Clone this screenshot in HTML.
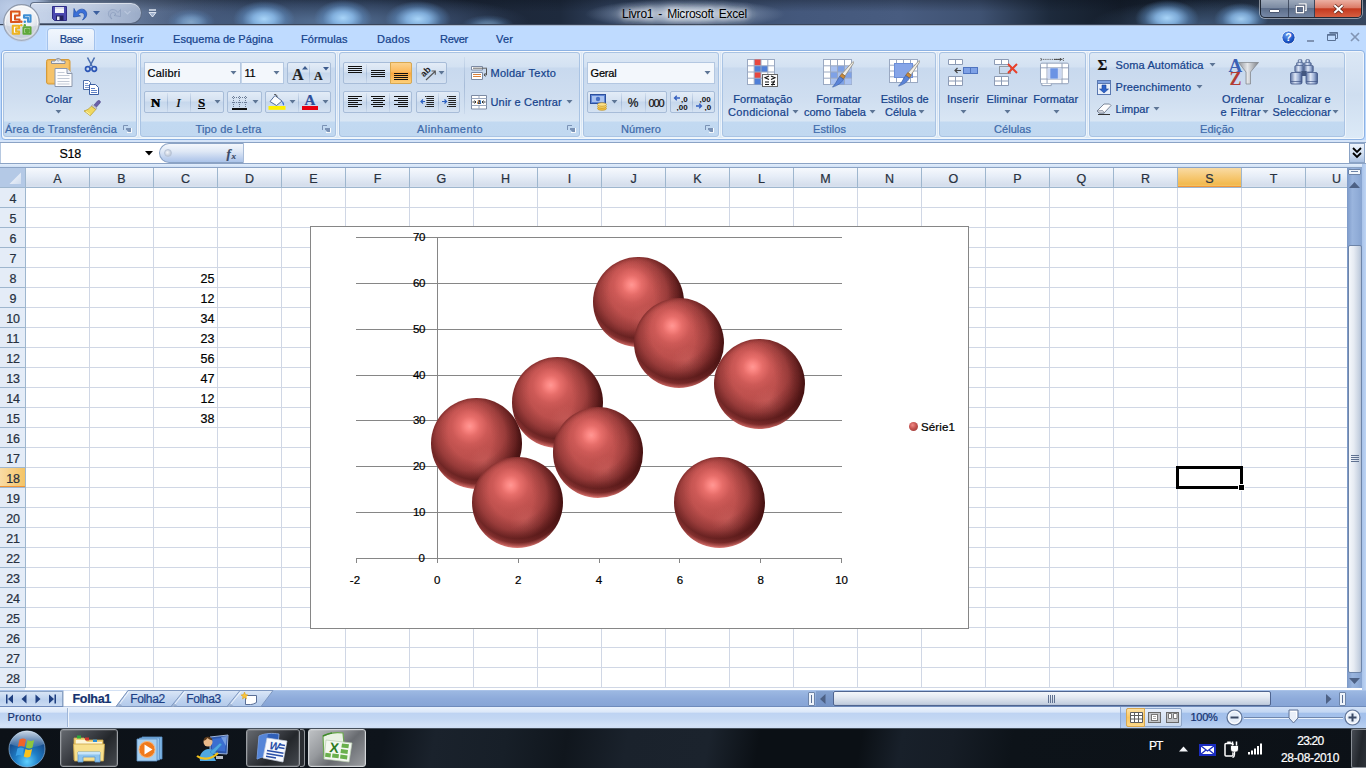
<!DOCTYPE html>
<html lang="pt"><head><meta charset="utf-8"><title>Livro1 - Microsoft Excel</title>
<style>
html,body{margin:0;padding:0}
body{width:1366px;height:768px;overflow:hidden;position:relative;background:#fff;font-family:"Liberation Sans",sans-serif;font-size:11px;color:#15428b}
div,span,svg{position:absolute;box-sizing:border-box}
.t{white-space:nowrap;display:block;-webkit-text-stroke:.22px}
/* title bar */
#title{left:0;top:0;width:1366px;height:26px;background:#1a2536;overflow:hidden}
#tabrow{left:0;top:26px;width:1366px;height:24px;background:#bfdbff}
#ribbon{left:0;top:50px;width:1366px;height:92px;background:#bfdbff}
.grp{top:2px;height:85px;border:1px solid #a9c3e3;border-radius:3px;background:linear-gradient(#dde8f5 0,#d3e1f2 14px,#c8d9ee 15px,#cfdef0 45px,#d9e6f4 68px,#c2d9f1 69px,#c1d8f0 84px);box-shadow:0 0 0 1px rgba(255,255,255,.55)}
.btn{border:1px solid #a7bcd8;border-radius:2px;background:linear-gradient(#e3ecf7 0,#d4e1f1 45%,#c6d7ec 50%,#d5e2f2 100%)}
.combo{border:1px solid #b3c7e1;background:#f3f7fc}
.arr{width:0;height:0;border-left:3px solid transparent;border-right:3px solid transparent;border-top:3px solid #5d7595}
.dl{width:8px;height:8px}
</style></head><body>
<div id="title" style="background:radial-gradient(ellipse 100px 15px at 685px 14px, rgba(222,230,241,.9), rgba(185,199,218,.7) 45%, rgba(140,158,186,.35) 75%, rgba(120,140,170,0) 100%),radial-gradient(ellipse 42px 30px at 12px 8px, rgba(190,206,232,1), rgba(175,194,224,.9) 60%, rgba(120,140,170,0) 100%),radial-gradient(ellipse 31px 18px at 264px 19px, rgba(168,212,248,1.0) 0, rgba(140,190,238,0.85) 35%, rgba(100,150,205,0.40) 70%, rgba(70,105,150,0) 100%),radial-gradient(ellipse 29px 18px at 343px 18px, rgba(168,212,248,1.0) 0, rgba(140,190,238,0.85) 35%, rgba(100,150,205,0.40) 70%, rgba(70,105,150,0) 100%),radial-gradient(ellipse 33px 18px at 418px 19px, rgba(168,212,248,1.0) 0, rgba(140,190,238,0.85) 35%, rgba(100,150,205,0.40) 70%, rgba(70,105,150,0) 100%),radial-gradient(ellipse 24px 13px at 191px 22px, rgba(168,212,248,0.6) 0, rgba(140,190,238,0.51) 35%, rgba(100,150,205,0.24) 70%, rgba(70,105,150,0) 100%),radial-gradient(ellipse 26px 10px at 488px 25px, rgba(168,212,248,0.5) 0, rgba(140,190,238,0.42) 35%, rgba(100,150,205,0.20) 70%, rgba(70,105,150,0) 100%),radial-gradient(ellipse 32px 18px at 1167px 18px, rgba(168,212,248,1.0) 0, rgba(140,190,238,0.85) 35%, rgba(100,150,205,0.40) 70%, rgba(70,105,150,0) 100%),radial-gradient(ellipse 27px 16px at 1241px 19px, rgba(168,212,248,0.95) 0, rgba(140,190,238,0.81) 35%, rgba(100,150,205,0.38) 70%, rgba(70,105,150,0) 100%),radial-gradient(ellipse 200px 30px at 330px 22px, rgba(95,125,165,.85), rgba(75,100,140,.5) 60%, rgba(50,70,100,0) 100%),radial-gradient(ellipse 110px 24px at 1200px 24px, rgba(80,110,150,.6), rgba(50,70,100,0) 100%),linear-gradient(rgba(10,16,26,.35) 0,rgba(10,16,26,0) 45%),linear-gradient(90deg,#8a9fc0 0,#8196b8 60px,#667a9b 130px,#4a5c7a 190px,#2c3a51 250px,#1f2b3d 310px,#1b2536 440px,#1e2a3d 560px,#31425e 610px,#3d506e 700px,#44587c 800px,#485c80 900px,#3f5272 980px,#1d2a3c 1050px,#141d2a 1120px,#1d2a3c 1200px,#2c3b52 1280px,#35465f 1366px)"></div>
<div style="left:0;top:24px;width:1366px;height:1px;background:#39455a"></div>
<div style="left:0;top:25px;width:1366px;height:1px;background:#a9bad2"></div>
<span class="t" style="left:622.0px;top:5.5px;font-size:12px;line-height:16px;color:#000;letter-spacing:-0.24px;word-spacing:2px;-webkit-text-stroke:0;text-shadow:0 0 5px rgba(255,255,255,.95),0 0 9px rgba(255,255,255,.8),0 0 14px rgba(255,255,255,.6);">Livro1 - Microsoft Excel</span>
<div id="tabrow"></div>
<div style="left:30px;top:2px;width:112px;height:22px;border:1px solid rgba(70,85,110,.8);border-radius:4px 11px 11px 0;background:linear-gradient(rgba(255,255,255,.18),rgba(255,255,255,0) 50%),linear-gradient(90deg,rgba(200,213,234,.95) 0,rgba(190,204,228,.92) 50%,rgba(165,181,208,.85) 100%);box-shadow:inset 0 1px 0 rgba(255,255,255,.5)"></div>
<svg style="left:52px;top:6px" width="15" height="15" viewBox="0 0 15 15"><path d="M0.500 0.500h14v14h-12l-2-2z" fill="#4a48b0" stroke="#2f2d86"/><rect x="3" y="1" width="9" height="6" fill="#f2f4fa"/><rect x="4" y="9.500" width="7.500" height="5" fill="#23225e"/><rect x="5" y="10.500" width="2.500" height="3.500" fill="#e8eaf4"/><path d="M3 1h9v2H3z" fill="#c9cde4" opacity=".6"/></svg>
<svg style="left:73px;top:6px" width="16" height="15" viewBox="0 0 16 15"><path d="M3 6.500c3-4 8-4.500 10-1 1.800 3.200 0 7-3.500 8.500 2-2.500 2.500-5 1-6.500-1.500-1.500-4-1-5.500 1l2.500 1.500L0.500 11 1 2.500z" fill="#3a6fd8" stroke="#2450a8" stroke-width=".7"/></svg>
<svg style="left:93px;top:11px" width="7" height="4"><path d="M0 0h7L3.500 4z" fill="#3c5f9e"/></svg>
<svg style="left:106px;top:7px" width="15" height="13" viewBox="0 0 15 13"><path d="M12 5.500c-2.500-3.500-7-4-9-1-1.500 2.800 0 6 3 7.500-1.800-2.200-2-4.300-.8-5.700 1.300-1.300 3.500-.9 4.800.9L8 8.500l6.500 1V2.500z" fill="#a9b8d2" stroke="#8497b8" stroke-width=".6"/></svg>
<svg style="left:124px;top:11px" width="7" height="4"><path d="M0.500 0l3 3 3-3" fill="none" stroke="#b9c6dc" stroke-width="1.200"/></svg>
<svg style="left:148px;top:9px" width="9" height="9" viewBox="0 0 9 9"><path d="M1 1h7" stroke="#e6ecf6" stroke-width="1.400"/><path d="M1 3.500h7L4.500 8z" fill="#9fb0cc" stroke="#e6ecf6" stroke-width=".9"/></svg>
<svg style="left:2px;top:3px" width="40" height="40" viewBox="0 0 40 40"><defs>
<radialGradient id="ob" cx=".5" cy=".3" r=".8"><stop offset="0" stop-color="#ffffff"/><stop offset=".45" stop-color="#eceff4"/><stop offset=".75" stop-color="#cfd5df"/><stop offset="1" stop-color="#f3f5f9"/></radialGradient></defs>
<circle cx="19.500" cy="19.500" r="17.800" fill="url(#ob)" stroke="#8e99ab" stroke-width="1.200"/>
<circle cx="19.500" cy="19.500" r="16.300" fill="none" stroke="#fff" stroke-width="1" opacity=".8"/>
<path d="M2.500 22a17 17 0 0 0 34 0c-9 3-24 3-34 0z" fill="#bfc6d2" opacity=".45"/>
<g fill="none" stroke-width="2.100" stroke-linejoin="round">
<path d="M9 8.500h8.500v4h-4.500v4h4.500v2.500H9z" stroke="#d9541e" fill="#fff"/><path d="M10.200 9.700h6.100" stroke="#f39a4d" stroke-width="1"/>
<path d="M22 12.200h6.500v6.500h-2.500v-4h-4z" stroke="#3f8fd4" fill="#fff"/>
<path d="M10.800 22.800h6.300v2.500h-3v3.200h3v2.300h-6.300z" stroke="#eeb422" fill="#fff"/>
<path d="M21.500 24.300h7v6.500h-7zM24 26.500h2.300v2.200H24z" stroke="#5fa83a" fill="#fff"/></g>
<circle cx="19.300" cy="18.800" r="1.300" fill="#d9541e"/><circle cx="22.800" cy="18.800" r="1.300" fill="#3f8fd4"/><circle cx="19.300" cy="22.300" r="1.200" fill="#eeb422"/><circle cx="22.800" cy="22.300" r="1.200" fill="#5fa83a"/>
</svg>
<div style="left:1260px;top:-1px;width:102px;height:19px;border:1px solid rgba(20,28,40,.9);border-radius:0 0 5px 5px;box-shadow:0 0 0 1px rgba(255,255,255,.45);background:linear-gradient(rgba(200,212,230,.75) 0,rgba(160,176,200,.7) 45%,rgba(110,128,158,.75) 50%,rgba(140,158,188,.75) 100%)"></div>
<div style="left:1315px;top:0;width:46px;height:17px;border-radius:0 0 4px 0;background:linear-gradient(#ecb0a2 0,#dc7c68 45%,#c4391e 52%,#d65f42 100%)"></div>
<div style="left:1288px;top:0;width:1px;height:17px;background:rgba(40,50,70,.7)"></div><div style="left:1314px;top:0;width:1px;height:17px;background:rgba(40,50,70,.8)"></div>
<div style="left:1269px;top:9px;width:11px;height:4px;background:#fff;border:1px solid #4b5872;border-radius:1px"></div>
<svg style="left:1295px;top:3px" width="12" height="11" viewBox="0 0 14 13"><path d="M4 1h9v8h-3" fill="none" stroke="#4b5872" stroke-width="3.200"/><path d="M4 1h9v8h-3" fill="none" stroke="#fff" stroke-width="1.600"/><rect x="1.500" y="4" width="8.500" height="7.500" fill="none" stroke="#4b5872" stroke-width="3.200"/><rect x="1.500" y="4" width="8.500" height="7.500" fill="none" stroke="#fff" stroke-width="1.600"/></svg>
<svg style="left:1332px;top:4px" width="13" height="10" viewBox="0 0 15 12"><path d="M2.500 1.500l10 9M12.500 1.500l-10 9" stroke="#5a2418" stroke-width="4.200"/><path d="M2.500 1.500l10 9M12.500 1.500l-10 9" stroke="#fff" stroke-width="2.400"/></svg>
<div style="left:47px;top:28px;width:48px;height:23px;border:1px solid #a3c2ec;border-bottom:none;border-radius:4px 4px 0 0;background:linear-gradient(#f1f6fd,#e6effb 60%,#dde9f8);box-shadow:0 0 2px rgba(255,255,255,.8)"></div>
<span class="t" style="left:59.7px;top:32.0px;font-size:11px;line-height:14px;color:#15428b;letter-spacing:-0.54px;">Base</span>
<span class="t" style="left:111.0px;top:32.0px;font-size:11px;line-height:14px;color:#15428b;letter-spacing:0.35px;">Inserir</span>
<span class="t" style="left:173.0px;top:32.0px;font-size:11px;line-height:14px;color:#15428b;letter-spacing:0.05px;">Esquema de Página</span>
<span class="t" style="left:301.0px;top:32.0px;font-size:11px;line-height:14px;color:#15428b;letter-spacing:0.08px;">Fórmulas</span>
<span class="t" style="left:377.0px;top:32.0px;font-size:11px;line-height:14px;color:#15428b;letter-spacing:0.24px;">Dados</span>
<span class="t" style="left:440.0px;top:32.0px;font-size:11px;line-height:14px;color:#15428b;letter-spacing:-0.27px;">Rever</span>
<span class="t" style="left:496.0px;top:32.0px;font-size:11px;line-height:14px;color:#15428b;letter-spacing:0.16px;">Ver</span>
<svg style="left:1281px;top:30px" width="15" height="15" viewBox="0 0 15 15"><defs><radialGradient id="hg" cx=".4" cy=".3" r=".8"><stop offset="0" stop-color="#6fa0ee"/><stop offset=".6" stop-color="#1f57c8"/><stop offset="1" stop-color="#0c3a9a"/></radialGradient></defs><circle cx="7.5" cy="7.5" r="6.6" fill="url(#hg)" stroke="#e8f0fb" stroke-width="1"/><text x="7.5" y="11.3" font-family="Liberation Sans,sans-serif" font-size="10.5" font-weight="bold" fill="#fff" text-anchor="middle">?</text></svg>
<div style="left:1307px;top:40px;width:7px;height:2px;background:#7f93b3"></div>
<svg style="left:1327px;top:32px" width="11" height="9" viewBox="0 0 11 9"><path d="M2.5 0.5h8v6h-2M0.5 2.5h8v6h-8z" fill="none" stroke="#5a7194"/><path d="M2.5 1h8M0.5 3h8" stroke="#5a7194" stroke-width="1.6"/></svg>
<svg style="left:1350px;top:32px" width="10" height="10" viewBox="0 0 10 10"><path d="M1 1l8 8M9 1l-8 8" stroke="#8295b4" stroke-width="1.700"/></svg>
<div id="ribbon">
<div style="left:1px;top:0;width:1364px;height:90px;border:1px solid #8db2e3;border-radius:4px;background:linear-gradient(#dbe7f5,#cfdef0 50%,#dceaf7);box-shadow:inset 0 0 0 1px rgba(255,255,255,.6)"></div>
<div class="grp" style="left:3px;width:134px"></div><span class="t" style="left:5.0px;top:72.0px;font-size:11px;line-height:14px;color:#3e6aaa;letter-spacing:0.18px;">Área de Transferência</span><svg style="left:123px;top:75px" width="9" height="9" viewBox="0 0 9 9"><path d="M0.5 5V0.5H5" fill="none" stroke="#7a92b5" stroke-width="1"/><path d="M3 3h5v5h-1.5L3 4.5z" fill="#7a92b5"/><path d="M4 7.5h4.5v-4.5" fill="none" stroke="#fff" stroke-width="1" opacity=".9"/></svg>
<div class="grp" style="left:140px;width:196px"></div><span class="t" style="left:195.5px;top:72.0px;font-size:11px;line-height:14px;color:#3e6aaa;letter-spacing:0.12px;">Tipo de Letra</span><svg style="left:322px;top:75px" width="9" height="9" viewBox="0 0 9 9"><path d="M0.5 5V0.5H5" fill="none" stroke="#7a92b5" stroke-width="1"/><path d="M3 3h5v5h-1.5L3 4.5z" fill="#7a92b5"/><path d="M4 7.5h4.5v-4.5" fill="none" stroke="#fff" stroke-width="1" opacity=".9"/></svg>
<div class="grp" style="left:339px;width:241px"></div><span class="t" style="left:417.0px;top:72.0px;font-size:11px;line-height:14px;color:#3e6aaa;letter-spacing:0.44px;">Alinhamento</span><svg style="left:567px;top:75px" width="9" height="9" viewBox="0 0 9 9"><path d="M0.5 5V0.5H5" fill="none" stroke="#7a92b5" stroke-width="1"/><path d="M3 3h5v5h-1.5L3 4.5z" fill="#7a92b5"/><path d="M4 7.5h4.5v-4.5" fill="none" stroke="#fff" stroke-width="1" opacity=".9"/></svg>
<div class="grp" style="left:583px;width:136px"></div><span class="t" style="left:621.0px;top:72.0px;font-size:11px;line-height:14px;color:#3e6aaa;letter-spacing:0.15px;">Número</span><svg style="left:705px;top:75px" width="9" height="9" viewBox="0 0 9 9"><path d="M0.5 5V0.5H5" fill="none" stroke="#7a92b5" stroke-width="1"/><path d="M3 3h5v5h-1.5L3 4.5z" fill="#7a92b5"/><path d="M4 7.5h4.5v-4.5" fill="none" stroke="#fff" stroke-width="1" opacity=".9"/></svg>
<div class="grp" style="left:722px;width:214px"></div><span class="t" style="left:813.0px;top:72.0px;font-size:11px;line-height:14px;color:#3e6aaa;letter-spacing:0.09px;">Estilos</span>
<div class="grp" style="left:939px;width:147px"></div><span class="t" style="left:994.0px;top:72.0px;font-size:11px;line-height:14px;color:#3e6aaa;letter-spacing:0.05px;">Células</span>
<div class="grp" style="left:1089px;width:256px"></div><span class="t" style="left:1200.0px;top:72.0px;font-size:11px;line-height:14px;color:#3e6aaa;letter-spacing:0.06px;">Edição</span>
<svg style="left:45px;top:6px" width="29" height="33" viewBox="0 0 29 33">
<rect x="1.500" y="3.500" width="23.500" height="24.500" rx="2" fill="#f2b956" stroke="#d39a3c"/>
<rect x="3" y="5" width="20.500" height="21.500" rx="1" fill="#f7c772" opacity=".75"/>
<path d="M6.500 7.500V5H10a3.300 3.300 0 0 1 6.400 0H20v2.500z" fill="#eceef2" stroke="#7f8796" stroke-width=".9"/><circle cx="13.200" cy="4" r="1.100" fill="#fff" stroke="#7f8796" stroke-width=".6"/>
<path d="M10 12.500h12l5 5v13h-17z" fill="#fdfdfe" stroke="#8c98ad"/>
<path d="M22 12.500v5h5" fill="#e4e9f2" stroke="#8c98ad"/>
<path d="M12.500 16.500h7M12.500 19.500h12M12.500 22.500h12M12.500 25.500h12M12.500 28h12" stroke="#c3cad6" stroke-width="1"/></svg>
<span class="t" style="left:45.6px;top:42.0px;font-size:11px;line-height:14px;color:#15428b;letter-spacing:0.04px;">Colar</span>
<svg style="left:55px;top:60px" width="7" height="4" viewBox="0 0 7 4"><path d="M0.5 0h6L3.5 3.5z" fill="#5d7595"/></svg>
<svg style="left:84px;top:7px" width="14" height="16" viewBox="0 0 14 16">
<path d="M3.5 0.5L8 9M10.5 0.5L6 9" stroke="#4b6fb0" stroke-width="1.6" fill="none"/>
<circle cx="3.8" cy="12" r="2.3" fill="none" stroke="#2b55b5" stroke-width="1.7"/><circle cx="10.2" cy="12" r="2.3" fill="none" stroke="#2b55b5" stroke-width="1.7"/></svg>
<svg style="left:83px;top:30px" width="16" height="15" viewBox="0 0 16 15">
<path d="M0.5 0.5h5l2 2v7h-7z" fill="#fff" stroke="#4a6ca8"/><path d="M2 3.5h3M2 5.5h4M2 7.5h4" stroke="#7f9bd0"/>
<path d="M6.5 4.5h6l3 3v7h-9z" fill="#fff" stroke="#3b5fa3"/><path d="M8 8.5h4M8 10.5h6M8 12.5h6" stroke="#5f82c6"/></svg>
<svg style="left:83px;top:50px" width="18" height="17" viewBox="0 0 18 17">
<path d="M11 5l3.5-4a1.6 1.6 0 0 1 2.5 2l-3.5 4z" fill="#6a5fa8" stroke="#4c4488" stroke-width=".6"/>
<path d="M9.5 4.5l4.5 3.5-1.2 1.6-4.6-3.4z" fill="#c9c9d6" stroke="#8888a0" stroke-width=".5"/>
<path d="M8.4 6.2l4.4 3.3-5.5 6.2-6.3-4.8c2.5-.5 5.5-2.200 7.400-4.700z" fill="#f0d860" stroke="#b89b2a" stroke-width=".7"/>
<path d="M3 11.500l4 3" stroke="#fff6b0" stroke-width="1"/></svg>
<div class="combo" style="left:144px;top:12px;width:97px;height:22px"></div>
<div class="combo" style="left:241px;top:12px;width:43px;height:22px;border-left-color:#c5d5e8"></div>
<span class="t" style="left:147.5px;top:15.8px;font-size:11px;line-height:14px;color:#000;letter-spacing:0.26px;">Calibri</span>
<svg style="left:230px;top:21px" width="7" height="4" viewBox="0 0 7 4"><path d="M0.5 0h6L3.5 3.5z" fill="#5d7595"/></svg>
<span class="t" style="left:244.5px;top:15.8px;font-size:11px;line-height:14px;color:#000;letter-spacing:-0.21px;">11</span>
<svg style="left:273px;top:21px" width="7" height="4" viewBox="0 0 7 4"><path d="M0.5 0h6L3.5 3.5z" fill="#5d7595"/></svg>
<div class="btn" style="left:287px;top:12px;width:44px;height:22px;"></div>
<div style="left:309px;top:14px;width:1px;height:19px;background:linear-gradient(rgba(160,182,212,.2),#a7bcd8 50%,rgba(160,182,212,.2))"></div>
<span class="t" style="left:292.0px;top:13.5px;font-size:16px;line-height:21px;color:#222;font-weight:bold;font-family:'Liberation Serif',serif;">A</span>
<svg style="left:302px;top:16px" width="6" height="4"><path d="M0 3.5L3 0l3 3.500z" fill="#3b5a8c"/></svg>
<span class="t" style="left:314.0px;top:17.5px;font-size:12px;line-height:16px;color:#222;font-weight:bold;font-family:'Liberation Serif',serif;">A</span>
<svg style="left:323px;top:17px" width="6" height="4"><path d="M0 0h6L3 3.500z" fill="#3b5a8c"/></svg>
<div class="btn" style="left:144px;top:41px;width:80px;height:22px;"></div>
<div style="left:167px;top:43px;width:1px;height:19px;background:linear-gradient(rgba(160,182,212,.2),#a7bcd8 50%,rgba(160,182,212,.2))"></div>
<div style="left:190px;top:43px;width:1px;height:19px;background:linear-gradient(rgba(160,182,212,.2),#a7bcd8 50%,rgba(160,182,212,.2))"></div>
<span class="t" style="left:150.8px;top:44.0px;font-size:13px;line-height:17px;color:#000;font-weight:bold;font-family:'Liberation Serif',serif;text-shadow:.4px 0 0 #000;">N</span>
<span class="t" style="left:176.3px;top:44.0px;font-size:13px;line-height:17px;color:#000;font-style:italic;font-family:'Liberation Serif',serif;">I</span>
<span class="t" style="left:197.9px;top:43.5px;font-size:13px;line-height:17px;color:#000;font-weight:bold;font-family:'Liberation Serif',serif;text-decoration:underline;">S</span>
<svg style="left:214px;top:50px" width="7" height="4" viewBox="0 0 7 4"><path d="M0.5 0h6L3.5 3.5z" fill="#5d7595"/></svg>
<div class="btn" style="left:227px;top:41px;width:35px;height:22px;"></div>
<svg style="left:232px;top:46px" width="15" height="15" viewBox="0 0 15 15"><path d="M1.500 0v12M7.500 0v12M13.500 0v12M0 1.500h15M0 6.500h15" stroke="#6b7c96" stroke-dasharray="1 1" fill="none"/><path d="M0 13h15" stroke="#111" stroke-width="2"/></svg>
<svg style="left:252px;top:50px" width="7" height="4" viewBox="0 0 7 4"><path d="M0.5 0h6L3.5 3.5z" fill="#5d7595"/></svg>
<div class="btn" style="left:265px;top:41px;width:66px;height:22px;"></div>
<div style="left:298px;top:43px;width:1px;height:19px;background:linear-gradient(rgba(160,182,212,.2),#a7bcd8 50%,rgba(160,182,212,.2))"></div>
<svg style="left:268px;top:44px" width="19" height="17" viewBox="0 0 19 17">
<path d="M7 1.500l7 5.500-5.500 4.500-6.500-4z" fill="#fbfcff" stroke="#44608f" stroke-width=".9"/>
<path d="M6 0.500c1-.8 3 0 3 2.500" fill="none" stroke="#333" stroke-width=".9"/>
<path d="M14 7c1.500 1 2.500 2.500 2 4.500-.8-.2-1.800-1.500-2-4.500z" fill="#3a6fd0"/>
<rect x="0.500" y="12" width="17" height="3.800" fill="#fff100"/></svg>
<svg style="left:289px;top:50px" width="7" height="4" viewBox="0 0 7 4"><path d="M0.5 0h6L3.5 3.5z" fill="#5d7595"/></svg>
<span class="t" style="left:304.6px;top:40.0px;font-size:15px;line-height:20px;color:#2e4f9a;font-weight:bold;font-family:'Liberation Serif',serif;">A</span>
<div style="left:302px;top:56px;width:16px;height:4px;background:#e8000f"></div>
<svg style="left:322px;top:50px" width="7" height="4" viewBox="0 0 7 4"><path d="M0.5 0h6L3.5 3.5z" fill="#5d7595"/></svg>
<div class="btn" style="left:343px;top:12px;width:69px;height:22px;"></div>
<div style="left:390px;top:12px;width:22px;height:22px;border:1px solid #d9a850;border-radius:0 2px 2px 0;background:linear-gradient(#fbd28f,#fdb95a 45%,#fba73e 50%,#fdd07a)"></div>
<div style="left:366px;top:14px;width:1px;height:19px;background:linear-gradient(rgba(160,182,212,.2),#a7bcd8 50%,rgba(160,182,212,.2))"></div>
<svg style="left:348px;top:16px" width="16" height="9"><path d="M0 0.5h14M0 2.5h14M0 4.5h14M0 6.5h14" stroke="#111" stroke-width="1" fill="none"/></svg>
<svg style="left:371px;top:20px" width="16" height="9"><path d="M0 0.5h14M0 2.5h14M0 4.5h14M0 6.5h14" stroke="#111" stroke-width="1" fill="none"/></svg>
<svg style="left:394px;top:23px" width="16" height="9"><path d="M0 0.5h14M0 2.5h14M0 4.5h14M0 6.5h14" stroke="#111" stroke-width="1" fill="none"/></svg>
<div class="btn" style="left:416px;top:12px;width:31px;height:22px;"></div>
<svg style="left:417px;top:14px" width="20" height="19" viewBox="0 0 20 19"><text x="0" y="0" transform="translate(7 13.500) rotate(-45)" font-family="Liberation Sans,sans-serif" font-size="9" font-weight="bold" fill="#222">ab</text><path d="M9 16L18 7.500M14.500 7h3.800v3.800" fill="none" stroke="#555" stroke-width="1.100"/></svg>
<svg style="left:438px;top:21px" width="7" height="4" viewBox="0 0 7 4"><path d="M0.5 0h6L3.5 3.5z" fill="#5d7595"/></svg>
<div class="btn" style="left:343px;top:41px;width:69px;height:22px;"></div>
<div style="left:366px;top:43px;width:1px;height:19px;background:linear-gradient(rgba(160,182,212,.2),#a7bcd8 50%,rgba(160,182,212,.2))"></div>
<div style="left:389px;top:43px;width:1px;height:19px;background:linear-gradient(rgba(160,182,212,.2),#a7bcd8 50%,rgba(160,182,212,.2))"></div>
<svg style="left:348px;top:46px" width="16" height="13"><path d="M0 0.5h14M0 2.5h10M0 4.5h14M0 6.5h10M0 8.5h14M0 10.5h10" stroke="#111" stroke-width="1" fill="none"/></svg>
<svg style="left:371px;top:46px" width="16" height="13"><path d="M0 0.5h14M2 2.5h10M0 4.5h14M2 6.5h10M0 8.5h14M2 10.5h10" stroke="#111" stroke-width="1" fill="none"/></svg>
<svg style="left:394px;top:46px" width="16" height="13"><path d="M0 0.5h14M4 2.5h10M0 4.5h14M4 6.5h10M0 8.5h14M4 10.5h10" stroke="#111" stroke-width="1" fill="none"/></svg>
<div class="btn" style="left:416px;top:41px;width:44px;height:22px;"></div>
<div style="left:438px;top:43px;width:1px;height:19px;background:linear-gradient(rgba(160,182,212,.2),#a7bcd8 50%,rgba(160,182,212,.2))"></div>
<svg style="left:420px;top:46px" width="15" height="13" viewBox="0 0 15 13"><path d="M5 0.500h9M7 2.500h7M7 4.500h7M7 6.500h7M7 8.500h7M5 10.500h9" stroke="#222"/><path d="M5 5.500H1M3 3.500l-2 2 2 2" stroke="#2b5fc0" fill="none" stroke-width="1.200"/><path d="M6.500 0v12" stroke="#666" stroke-dasharray="1 1"/></svg>
<svg style="left:442px;top:46px" width="15" height="13" viewBox="0 0 15 13"><path d="M5 0.500h9M7 2.500h7M7 4.500h7M7 6.500h7M7 8.500h7M5 10.500h9" stroke="#222"/><path d="M0 5.500h4M2.500 3.500l2 2-2 2" stroke="#2b5fc0" fill="none" stroke-width="1.200"/><path d="M6.500 0v12" stroke="#666" stroke-dasharray="1 1"/></svg>
<div style="left:464px;top:7px;width:1px;height:57px;background:linear-gradient(rgba(160,182,212,.2),#a7bcd8 50%,rgba(160,182,212,.2))"></div>
<svg style="left:471px;top:16px" width="17" height="15" viewBox="0 0 17 15"><path d="M0.500 0.500h11v3.500h-11z" fill="#fff" stroke="#7c8aa3"/><path d="M2 2.200h14" stroke="#666"/><path d="M0.500 6.500h11v7h-11z" fill="#fff" stroke="#7c8aa3"/><path d="M2 8.500h8M2 10.500h8" stroke="#d9803a"/><path d="M15.500 2.500v6.500h-2M14.500 7l-1.500 2 1.500 1.500" fill="none" stroke="#444" stroke-width=".9"/></svg>
<span class="t" style="left:490.5px;top:16.0px;font-size:11px;line-height:14px;color:#15428b;letter-spacing:0.23px;">Moldar Texto</span>
<svg style="left:471px;top:45px" width="17" height="15" viewBox="0 0 17 15"><path d="M0.500 0.500h15v13.500h-15z" fill="#fff" stroke="#7c8aa3"/><path d="M0.500 3.500h15M0.500 10.500h15M8 0.500v3M8 10.500v3.500" stroke="#9aa7bd"/><rect x="1" y="4" width="14" height="6" fill="#fdfdfe"/><text x="8" y="9.300" font-size="7.500" font-weight="bold" font-family="Liberation Serif,serif" text-anchor="middle" fill="#111">a</text><path d="M1.500 7h3.500M3.500 5.500L5 7 3.500 8.500M14.500 7H11M12.500 5.500L11 7l1.500 1.500" stroke="#222" fill="none" stroke-width=".9"/></svg>
<span class="t" style="left:490.5px;top:45.0px;font-size:11px;line-height:14px;color:#15428b;letter-spacing:0.17px;">Unir e Centrar</span>
<svg style="left:566px;top:50px" width="7" height="4" viewBox="0 0 7 4"><path d="M0.5 0h6L3.5 3.5z" fill="#5d7595"/></svg>
<div class="combo" style="left:587px;top:12px;width:128px;height:22px"></div>
<span class="t" style="left:590.5px;top:15.8px;font-size:11px;line-height:14px;color:#000;letter-spacing:-0.18px;">Geral</span>
<svg style="left:704px;top:21px" width="7" height="4" viewBox="0 0 7 4"><path d="M0.5 0h6L3.5 3.5z" fill="#5d7595"/></svg>
<div class="btn" style="left:587px;top:41px;width:80px;height:22px;"></div>
<div style="left:621px;top:43px;width:1px;height:19px;background:linear-gradient(rgba(160,182,212,.2),#a7bcd8 50%,rgba(160,182,212,.2))"></div>
<div style="left:645px;top:43px;width:1px;height:19px;background:linear-gradient(rgba(160,182,212,.2),#a7bcd8 50%,rgba(160,182,212,.2))"></div>
<svg style="left:590px;top:44px" width="18" height="17" viewBox="0 0 18 17"><rect x="0.500" y="0.500" width="15" height="9" fill="#5f86d6" stroke="#2c4f9c"/><rect x="2" y="2" width="12" height="6" fill="#a9c2ef"/><circle cx="8" cy="5" r="2.200" fill="#466fc4"/><ellipse cx="12" cy="14.500" rx="4.500" ry="1.800" fill="#f5c242" stroke="#b98a1a" stroke-width=".6"/><ellipse cx="12" cy="12.500" rx="4.500" ry="1.800" fill="#f9d465" stroke="#b98a1a" stroke-width=".6"/><ellipse cx="12" cy="10.500" rx="4.500" ry="1.800" fill="#fbe08a" stroke="#b98a1a" stroke-width=".6"/></svg>
<svg style="left:611px;top:50px" width="7" height="4" viewBox="0 0 7 4"><path d="M0.5 0h6L3.5 3.5z" fill="#5d7595"/></svg>
<span class="t" style="left:627.7px;top:44.5px;font-size:12px;line-height:16px;color:#111;">%</span>
<span class="t" style="left:648.5px;top:45.5px;font-size:11px;line-height:14px;color:#111;letter-spacing:-1.12px;">000</span>
<div class="btn" style="left:670px;top:41px;width:45px;height:22px;"></div>
<div style="left:692px;top:43px;width:1px;height:19px;background:linear-gradient(rgba(160,182,212,.2),#a7bcd8 50%,rgba(160,182,212,.2))"></div>
<svg style="left:672px;top:44px" width="20" height="17" viewBox="0 0 20 17"><text x="9" y="7.500" font-size="8" font-weight="bold" font-family="Liberation Sans,sans-serif" fill="#111">,0</text><text x="4.500" y="15.500" font-size="8" font-weight="bold" font-family="Liberation Sans,sans-serif" fill="#111">,00</text><path d="M8 4H2.500M4.800 1.800L2.500 4l2.300 2.200" stroke="#3560c0" fill="none" stroke-width="1.300"/></svg>
<svg style="left:694px;top:44px" width="20" height="17" viewBox="0 0 20 17"><text x="5.500" y="7.500" font-size="8" font-weight="bold" font-family="Liberation Sans,sans-serif" fill="#111">,00</text><text x="10.500" y="15.500" font-size="8" font-weight="bold" font-family="Liberation Sans,sans-serif" fill="#111">,0</text><path d="M2 12h5.500M5.200 9.800L7.500 12l-2.300 2.200" stroke="#3560c0" fill="none" stroke-width="1.300"/></svg>
<svg style="left:747px;top:9px" width="28" height="26" viewBox="0 0 28 26"><rect x="0.500" y="0.500" width="27" height="25" fill="#fff" stroke="#9aa9c2"/><rect x="7.2" y="0.5" width="6.8" height="6.2" fill="#e8473f"/><rect x="7.2" y="6.8" width="6.8" height="6.2" fill="#4f7fd8"/><rect x="14.0" y="6.8" width="6.8" height="6.2" fill="#4f7fd8"/><rect x="7.2" y="13.0" width="6.8" height="6.2" fill="#e8473f"/><rect x="7.2" y="19.2" width="6.8" height="6.2" fill="#4f7fd8"/><path d="M7.2 0.500v25M14.0 0.500v25M20.8 0.500v25M0.500 6.8h27M0.500 13.0h27M0.500 19.2h27" stroke="#9aa9c2" fill="none"/></svg>
<svg style="left:762px;top:24px" width="16" height="13" viewBox="0 0 16 13"><rect x="0.500" y="0.500" width="15" height="12" fill="#fdfdfd" stroke="#666"/><path d="M7 2l-4 1.800 4 1.800M3 8h4M3 10.500h4" stroke="#111" fill="none" stroke-width="1.100"/><path d="M9 2l4 1.800-4 1.800M9 8h4M9 10.500h4M12.500 6.500l-2.500 5" stroke="#111" fill="none" stroke-width="1.100"/></svg>
<span class="t" style="left:733.3px;top:42.2px;font-size:11px;line-height:14px;color:#15428b;letter-spacing:0.03px;">Formatação</span>
<span class="t" style="left:728.0px;top:54.8px;font-size:11px;line-height:14px;color:#15428b;letter-spacing:0.32px;">Condicional</span>
<svg style="left:792px;top:60px" width="7" height="4" viewBox="0 0 7 4"><path d="M0.5 0h6L3.5 3.5z" fill="#5d7595"/></svg>
<svg style="left:823px;top:9px" width="29" height="26" viewBox="0 0 29 26"><rect x="0.500" y="0.500" width="28" height="25" fill="#fff" stroke="#9aa9c2"/><rect x="7.5" y="6.8" width="7.0" height="6.2" fill="#a9c1f0"/><rect x="14.5" y="6.8" width="7.0" height="6.2" fill="#7ea1e6"/><rect x="21.5" y="6.8" width="7.0" height="6.2" fill="#a9c1f0"/><rect x="7.5" y="13.0" width="7.0" height="6.2" fill="#7ea1e6"/><rect x="14.5" y="13.0" width="7.0" height="6.2" fill="#a9c1f0"/><rect x="21.5" y="13.0" width="7.0" height="6.2" fill="#7ea1e6"/><rect x="7.5" y="19.2" width="7.0" height="6.2" fill="#a9c1f0"/><rect x="14.5" y="19.2" width="7.0" height="6.2" fill="#7ea1e6"/><rect x="21.5" y="19.2" width="7.0" height="6.2" fill="#a9c1f0"/><path d="M7.5 0.500v25M14.5 0.500v25M21.5 0.500v25M0.500 6.8h28M0.500 13.0h28M0.500 19.2h28" stroke="#9aa9c2" fill="none"/></svg>
<svg style="left:832px;top:11px" width="22" height="27" viewBox="0 0 22 27"><path d="M21 0.500c.8.500.8 1.200.3 2l-8.300 12.500-3-2.200z" fill="#f1eee6" stroke="#8f8a7c" stroke-width=".8"/><path d="M9.800 12.600l3.400 2.500-1.800 3-3.800-2.600z" fill="#c98a3c" stroke="#8a5a1e" stroke-width=".6"/><path d="M7.600 15.500l3.800 2.600c-1.500 3.500-5.500 6.500-10.900 8 3-3 4.300-6.600 7.100-10.600z" fill="#5b84d8" stroke="#34599f" stroke-width=".6"/></svg>
<span class="t" style="left:816.3px;top:42.2px;font-size:11px;line-height:14px;color:#15428b;letter-spacing:0.05px;">Formatar</span>
<span class="t" style="left:804.0px;top:54.8px;font-size:11px;line-height:14px;color:#15428b;letter-spacing:-0.02px;">como Tabela</span>
<svg style="left:869px;top:60px" width="7" height="4" viewBox="0 0 7 4"><path d="M0.5 0h6L3.5 3.5z" fill="#5d7595"/></svg>
<svg style="left:889px;top:9px" width="29" height="24" viewBox="0 0 29 24"><rect x="0.500" y="0.500" width="28" height="23" fill="#fff" stroke="#9aa9c2"/><path d="M7.5 0.500v23M14.5 0.500v23M21.5 0.500v23M0.500 6.2h28M0.500 12.0h28M0.500 17.8h28" stroke="#9aa9c2" fill="none"/></svg>
<div style="left:894px;top:13px;width:19px;height:15px;background:#86a5e8;border:1px solid #6b8ed8"></div>
<svg style="left:898px;top:10px" width="22" height="27" viewBox="0 0 22 27"><path d="M21 0.500c.8.500.8 1.200.3 2l-8.300 12.500-3-2.200z" fill="#f1eee6" stroke="#8f8a7c" stroke-width=".8"/><path d="M9.800 12.600l3.400 2.500-1.800 3-3.800-2.600z" fill="#c98a3c" stroke="#8a5a1e" stroke-width=".6"/><path d="M7.600 15.500l3.800 2.600c-1.500 3.500-5.500 6.500-10.900 8 3-3 4.300-6.600 7.100-10.600z" fill="#5b84d8" stroke="#34599f" stroke-width=".6"/></svg>
<span class="t" style="left:880.7px;top:42.2px;font-size:11px;line-height:14px;color:#15428b;letter-spacing:0.03px;">Estilos de</span>
<span class="t" style="left:885.0px;top:54.8px;font-size:11px;line-height:14px;color:#15428b;letter-spacing:-0.03px;">Célula</span>
<svg style="left:918px;top:60px" width="7" height="4" viewBox="0 0 7 4"><path d="M0.5 0h6L3.5 3.5z" fill="#5d7595"/></svg>
<svg style="left:948px;top:9px" width="31" height="28" viewBox="0 0 31 28"><path d="M0.500 0.500h14v5h-14zM7.500 0.500v5" fill="#fff" stroke="#8c9bb5"/><path d="M0.500 17.500h14v9h-14zM7.500 17.500v9M0.500 22h14" fill="#fff" stroke="#8c9bb5"/><rect x="15.500" y="8.500" width="14" height="6" fill="#7ea1e6" stroke="#4f74c0"/><path d="M22.500 8.500v6" stroke="#4f74c0"/><path d="M13 11.500H7M9.500 9l-2.500 2.500 2.500 2.500" fill="none" stroke="#444" stroke-width="1.200"/></svg>
<span class="t" style="left:947.0px;top:42.0px;font-size:11px;line-height:14px;color:#15428b;letter-spacing:0.21px;">Inserir</span>
<svg style="left:960px;top:60px" width="7" height="4" viewBox="0 0 7 4"><path d="M0.5 0h6L3.5 3.5z" fill="#5d7595"/></svg>
<svg style="left:994px;top:9px" width="27" height="28" viewBox="0 0 27 28"><path d="M0.500 0.500h14v5h-14zM7.500 0.500v5" fill="#fff" stroke="#8c9bb5"/><path d="M0.500 17.500h14v9h-14zM7.500 17.500v9M0.500 22h14" fill="#fff" stroke="#8c9bb5"/><rect x="5.500" y="7.500" width="11" height="7" fill="none" stroke="#555" stroke-dasharray="1 1"/><path d="M14 5l9 9M23 5l-9 9" stroke="#e8402a" stroke-width="2"/></svg>
<span class="t" style="left:986.5px;top:42.0px;font-size:11px;line-height:14px;color:#15428b;letter-spacing:0.16px;">Eliminar</span>
<svg style="left:1004px;top:60px" width="7" height="4" viewBox="0 0 7 4"><path d="M0.5 0h6L3.5 3.5z" fill="#5d7595"/></svg>
<svg style="left:1039px;top:8px" width="32" height="29" viewBox="0 0 32 31"><path d="M1 1.500h24M1 0v3M25 0v3" stroke="#444" stroke-dasharray="1 1"/><path d="M15 1.500h8M21 0l2 1.500-2 1.500" stroke="#444" fill="none"/><rect x="0.500" y="5.500" width="30" height="22" rx="1.500" fill="#fff" stroke="#8c9bb5"/><path d="M7.500 5.500v22M23.500 5.500v22M0.500 10.500h30M0.500 22.500h30" stroke="#8c9bb5"/><rect x="8" y="11" width="15" height="11" fill="#cdd9f3"/><rect x="11" y="11" width="8" height="11" fill="#6b93e4"/><path d="M2 27.500v2h10v-2" fill="#fff" stroke="#8c9bb5"/></svg>
<span class="t" style="left:1033.2px;top:42.0px;font-size:11px;line-height:14px;color:#15428b;letter-spacing:0.05px;">Formatar</span>
<svg style="left:1052.7px;top:60px" width="7" height="4" viewBox="0 0 7 4"><path d="M0.5 0h6L3.5 3.5z" fill="#5d7595"/></svg>
<span class="t" style="left:1097.5px;top:4.5px;font-size:15px;line-height:20px;color:#111;font-weight:bold;font-family:'Liberation Serif',serif;">Σ</span>
<span class="t" style="left:1115.6px;top:7.8px;font-size:11px;line-height:14px;color:#15428b;letter-spacing:0.12px;">Soma Automática</span>
<svg style="left:1208.5px;top:13px" width="7" height="4" viewBox="0 0 7 4"><path d="M0.5 0h6L3.5 3.5z" fill="#5d7595"/></svg>
<svg style="left:1097px;top:30px" width="14" height="15" viewBox="0 0 14 15"><rect x="0.500" y="0.500" width="13" height="14" fill="#e9f0fb" stroke="#5a78b0"/><rect x="0.500" y="0.500" width="13" height="3" fill="#7fa2e0" stroke="#5a78b0"/><path d="M5 5h4v4h2.500L7 13 2.500 9H5z" fill="#2d62c8" stroke="#1c4596" stroke-width=".6"/></svg>
<span class="t" style="left:1115.6px;top:30.0px;font-size:11px;line-height:14px;color:#15428b;letter-spacing:0.12px;">Preenchimento</span>
<svg style="left:1195.5px;top:35px" width="7" height="4" viewBox="0 0 7 4"><path d="M0.5 0h6L3.5 3.5z" fill="#5d7595"/></svg>
<svg style="left:1096px;top:53px" width="16" height="12" viewBox="0 0 16 12"><path d="M1 8l7-7h5.500l1.500 1.500-7 7.500H3z" fill="#fcfcfd" stroke="#6e7a8e" stroke-width=".9"/><path d="M1 8l2 2h5.500l-2-2.500z" fill="#d9dde6" stroke="#6e7a8e" stroke-width=".7"/><path d="M2 11.500h12" stroke="#333"/></svg>
<span class="t" style="left:1115.6px;top:52.3px;font-size:11px;line-height:14px;color:#15428b;letter-spacing:-0.02px;">Limpar</span>
<svg style="left:1152.5px;top:56.5px" width="7" height="4" viewBox="0 0 7 4"><path d="M0.5 0h6L3.5 3.5z" fill="#5d7595"/></svg>
<svg style="left:1238px;top:12px" width="21" height="23" viewBox="0 0 21 23"><defs><linearGradient id="fg" x1="0" x2="1"><stop offset="0" stop-color="#8f9399"/><stop offset=".45" stop-color="#e4e6e9"/><stop offset="1" stop-color="#7d8187"/></linearGradient></defs><path d="M0.500 0.500h20l-8 9.500v12h-4.500v-12z" fill="url(#fg)" stroke="#7d8187" stroke-width=".7"/></svg>
<span class="t" style="left:1228.5px;top:2.5px;font-size:19px;line-height:25px;color:#3b60b4;font-weight:bold;font-family:'Liberation Serif',serif;-webkit-text-stroke:0;">A</span>
<span class="t" style="left:1229.5px;top:18.0px;font-size:18px;line-height:23px;color:#b23c34;font-weight:bold;font-family:'Liberation Serif',serif;-webkit-text-stroke:0;">Z</span>
<span class="t" style="left:1222.0px;top:42.3px;font-size:11px;line-height:14px;color:#15428b;letter-spacing:0.24px;">Ordenar</span>
<span class="t" style="left:1220.5px;top:55.2px;font-size:11px;line-height:14px;color:#15428b;letter-spacing:0.36px;">e Filtrar</span>
<svg style="left:1261.5px;top:60px" width="7" height="4" viewBox="0 0 7 4"><path d="M0.5 0h6L3.5 3.5z" fill="#5d7595"/></svg>
<svg style="left:1290px;top:9px" width="28" height="26" viewBox="0 0 28 26"><defs><linearGradient id="bg1" x1="0" x2="1"><stop offset="0" stop-color="#5d74a4"/><stop offset=".4" stop-color="#dde6f6"/><stop offset=".7" stop-color="#9fb2d6"/><stop offset="1" stop-color="#435b8e"/></linearGradient></defs>
<rect x="8.200" y="0.500" width="3.800" height="3.500" rx="1.200" fill="url(#bg1)" stroke="#4a5f8c" stroke-width=".6"/><rect x="15.800" y="0.500" width="3.800" height="3.500" rx="1.200" fill="url(#bg1)" stroke="#4a5f8c" stroke-width=".6"/>
<rect x="6.500" y="3.500" width="7" height="3.500" rx="1" fill="url(#bg1)" stroke="#4a5f8c" stroke-width=".6"/><rect x="14.300" y="3.500" width="7" height="3.500" rx="1" fill="url(#bg1)" stroke="#4a5f8c" stroke-width=".6"/>
<rect x="4.800" y="6.500" width="8.700" height="6.500" rx="1" fill="url(#bg1)" stroke="#4a5f8c" stroke-width=".7"/><rect x="14.300" y="6.500" width="9" height="6.500" rx="1" fill="url(#bg1)" stroke="#4a5f8c" stroke-width=".7"/>
<rect x="11.500" y="12" width="5" height="5" fill="#43577f"/>
<rect x="0.500" y="13.500" width="11.500" height="11.500" rx="1.500" fill="url(#bg1)" stroke="#3f5485" stroke-width=".8"/><rect x="16" y="13.500" width="11.500" height="11.500" rx="1.500" fill="url(#bg1)" stroke="#3f5485" stroke-width=".8"/>
<path d="M1 22.500h10.500M16.500 22.500h10.500" stroke="#3f5485" stroke-width="1.200" opacity=".7"/></svg>
<span class="t" style="left:1277.5px;top:42.3px;font-size:11px;line-height:14px;color:#15428b;letter-spacing:-0.02px;">Localizar e</span>
<span class="t" style="left:1272.5px;top:55.2px;font-size:11px;line-height:14px;color:#15428b;letter-spacing:0.09px;">Seleccionar</span>
<svg style="left:1331.5px;top:60px" width="7" height="4" viewBox="0 0 7 4"><path d="M0.5 0h6L3.5 3.5z" fill="#5d7595"/></svg>
</div>
<div style="left:0;top:140px;width:1366px;height:28px;background:#c3d9f5"></div>
<div style="left:0;top:140px;width:1366px;height:2px;background:#d6e5f9"></div>
<div style="left:0;top:142px;width:1366px;height:22px;background:#fff;border-top:1px solid #8ba3c5;border-bottom:1px solid #8ba3c5"></div>
<div style="left:0;top:164px;width:1366px;height:3px;background:linear-gradient(#e3eefb,#cfe0f6)"></div>
<div style="left:0;top:167px;width:1366px;height:1px;background:#8ba3c5"></div>
<div style="left:0;top:143px;width:1px;height:20px;background:#b6c8e0"></div>
<span class="t" style="left:59.5px;top:145.5px;font-size:12.5px;line-height:16px;color:#000;letter-spacing:-0.25px;">S18</span>
<svg style="left:145px;top:151px" width="9" height="5"><path d="M0 0h8L4 4.500z" fill="#000"/></svg>
<div style="left:159px;top:143px;width:85px;height:20px;border:1px solid #8ba3c5;border-right-color:#a9bcd8;border-radius:10px 0 0 10px;background:linear-gradient(#f4f7fc,#e0e9f6 40%,#bccfed 80%,#abc4e9)"></div>
<div style="left:164px;top:149px;width:8px;height:8px;border-radius:4px;background:radial-gradient(circle at 40% 40%,#f4f6fa,#a9b6ca);border:1px solid #b9c5d8"></div>
<span class="t" style="left:226.5px;top:144.5px;font-size:13px;line-height:17px;color:#3b4a66;font-weight:bold;font-style:italic;font-family:'Liberation Serif',serif;">f</span>
<span class="t" style="left:231.5px;top:149.5px;font-size:9px;line-height:12px;color:#3b4a66;font-weight:bold;font-style:italic;font-family:'Liberation Serif',serif;">x</span>
<div style="left:1349px;top:143px;width:16px;height:20px;border:1px solid #8ba3c5;background:linear-gradient(#eef4fc,#cddcf0 60%,#a9c0e2)"></div>
<svg style="left:1352px;top:147px" width="10" height="12" viewBox="0 0 10 12"><path d="M1 1l4 4 4-4M1 6l4 4 4-4" fill="none" stroke="#000" stroke-width="1.800"/></svg>
<div style="left:0;top:168px;width:1347px;height:520px;background:#fff;overflow:hidden">
<div style="left:26px;top:20px;width:1322px;height:500px;background-image:linear-gradient(90deg,transparent 63px,#d0d7e5 63px),linear-gradient(transparent 19px,#d0d7e5 19px);background-size:64px 20px,64px 20px"></div>
<div style="left:0;top:0;width:1348px;height:20px;background:linear-gradient(#f6f9fd,#e6edf7 45%,#d5deec 90%,#d9e2f0);border-bottom:1px solid #9eb6ce"></div>
<div style="left:0;top:0;width:26px;height:20px;background:#b4c9e6;border-right:1px solid #9eb6ce;border-bottom:1px solid #9eb6ce"></div>
<svg style="left:9px;top:4px" width="13" height="13"><defs><linearGradient id="cg" x1="0" y1="0" x2="1" y2="1"><stop offset=".4" stop-color="#e8eef8"/><stop offset="1" stop-color="#cfdcee"/></linearGradient></defs><path d="M12 0.500v11.500H0.500z" fill="url(#cg)"/></svg>
<div style="left:1178px;top:0;width:63px;height:19px;background:linear-gradient(#f9dba4,#f6c873 50%,#f2b94e 90%,#f4c466);border-bottom:1px solid #f29536"></div>
<div style="left:89px;top:0;width:1px;height:19px;background:#9eb6ce"></div>
<span class="t" style="left:53.3px;top:2.5px;font-size:12.5px;line-height:16px;color:#27313f;">A</span>
<div style="left:153px;top:0;width:1px;height:19px;background:#9eb6ce"></div>
<span class="t" style="left:117.3px;top:2.5px;font-size:12.5px;line-height:16px;color:#27313f;">B</span>
<div style="left:217px;top:0;width:1px;height:19px;background:#9eb6ce"></div>
<span class="t" style="left:181.0px;top:2.5px;font-size:12.5px;line-height:16px;color:#27313f;">C</span>
<div style="left:281px;top:0;width:1px;height:19px;background:#9eb6ce"></div>
<span class="t" style="left:245.0px;top:2.5px;font-size:12.5px;line-height:16px;color:#27313f;">D</span>
<div style="left:345px;top:0;width:1px;height:19px;background:#9eb6ce"></div>
<span class="t" style="left:309.3px;top:2.5px;font-size:12.5px;line-height:16px;color:#27313f;">E</span>
<div style="left:409px;top:0;width:1px;height:19px;background:#9eb6ce"></div>
<span class="t" style="left:373.7px;top:2.5px;font-size:12.5px;line-height:16px;color:#27313f;">F</span>
<div style="left:473px;top:0;width:1px;height:19px;background:#9eb6ce"></div>
<span class="t" style="left:436.6px;top:2.5px;font-size:12.5px;line-height:16px;color:#27313f;">G</span>
<div style="left:537px;top:0;width:1px;height:19px;background:#9eb6ce"></div>
<span class="t" style="left:501.0px;top:2.5px;font-size:12.5px;line-height:16px;color:#27313f;">H</span>
<div style="left:601px;top:0;width:1px;height:19px;background:#9eb6ce"></div>
<span class="t" style="left:567.8px;top:2.5px;font-size:12.5px;line-height:16px;color:#27313f;">I</span>
<div style="left:665px;top:0;width:1px;height:19px;background:#9eb6ce"></div>
<span class="t" style="left:630.4px;top:2.5px;font-size:12.5px;line-height:16px;color:#27313f;">J</span>
<div style="left:729px;top:0;width:1px;height:19px;background:#9eb6ce"></div>
<span class="t" style="left:693.3px;top:2.5px;font-size:12.5px;line-height:16px;color:#27313f;">K</span>
<div style="left:793px;top:0;width:1px;height:19px;background:#9eb6ce"></div>
<span class="t" style="left:758.0px;top:2.5px;font-size:12.5px;line-height:16px;color:#27313f;">L</span>
<div style="left:857px;top:0;width:1px;height:19px;background:#9eb6ce"></div>
<span class="t" style="left:820.3px;top:2.5px;font-size:12.5px;line-height:16px;color:#27313f;">M</span>
<div style="left:921px;top:0;width:1px;height:19px;background:#9eb6ce"></div>
<span class="t" style="left:885.0px;top:2.5px;font-size:12.5px;line-height:16px;color:#27313f;">N</span>
<div style="left:985px;top:0;width:1px;height:19px;background:#9eb6ce"></div>
<span class="t" style="left:948.6px;top:2.5px;font-size:12.5px;line-height:16px;color:#27313f;">O</span>
<div style="left:1049px;top:0;width:1px;height:19px;background:#9eb6ce"></div>
<span class="t" style="left:1013.3px;top:2.5px;font-size:12.5px;line-height:16px;color:#27313f;">P</span>
<div style="left:1113px;top:0;width:1px;height:19px;background:#9eb6ce"></div>
<span class="t" style="left:1076.6px;top:2.5px;font-size:12.5px;line-height:16px;color:#27313f;">Q</span>
<div style="left:1177px;top:0;width:1px;height:19px;background:#9eb6ce"></div>
<span class="t" style="left:1141.0px;top:2.5px;font-size:12.5px;line-height:16px;color:#27313f;">R</span>
<div style="left:1241px;top:0;width:1px;height:19px;background:#9eb6ce"></div>
<span class="t" style="left:1205.3px;top:2.5px;font-size:12.5px;line-height:16px;color:#27313f;">S</span>
<div style="left:1305px;top:0;width:1px;height:19px;background:#9eb6ce"></div>
<span class="t" style="left:1269.7px;top:2.5px;font-size:12.5px;line-height:16px;color:#27313f;">T</span>
<div style="left:2000px;top:0;width:1px;height:19px;background:#9eb6ce"></div>
<span class="t" style="left:1332.0px;top:2.5px;font-size:12.5px;line-height:16px;color:#27313f;">U</span>
<div style="left:0;top:20px;width:26px;height:500px;background:#e4ecf7;border-right:1px solid #9eb6ce"></div>
<div style="left:0;top:39px;width:25px;height:1px;background:#9eb6ce"></div>
<span class="t" style="left:9.5px;top:22.5px;font-size:12.5px;line-height:16px;color:#27313f;">4</span>
<div style="left:0;top:59px;width:25px;height:1px;background:#9eb6ce"></div>
<span class="t" style="left:9.5px;top:42.5px;font-size:12.5px;line-height:16px;color:#27313f;">5</span>
<div style="left:0;top:79px;width:25px;height:1px;background:#9eb6ce"></div>
<span class="t" style="left:9.5px;top:62.5px;font-size:12.5px;line-height:16px;color:#27313f;">6</span>
<div style="left:0;top:99px;width:25px;height:1px;background:#9eb6ce"></div>
<span class="t" style="left:9.5px;top:82.5px;font-size:12.5px;line-height:16px;color:#27313f;">7</span>
<div style="left:0;top:119px;width:25px;height:1px;background:#9eb6ce"></div>
<span class="t" style="left:9.5px;top:102.5px;font-size:12.5px;line-height:16px;color:#27313f;">8</span>
<div style="left:0;top:139px;width:25px;height:1px;background:#9eb6ce"></div>
<span class="t" style="left:9.5px;top:122.5px;font-size:12.5px;line-height:16px;color:#27313f;">9</span>
<div style="left:0;top:159px;width:25px;height:1px;background:#9eb6ce"></div>
<span class="t" style="left:6.2px;top:142.5px;font-size:12.5px;line-height:16px;color:#27313f;letter-spacing:-0.20px;">10</span>
<div style="left:0;top:179px;width:25px;height:1px;background:#9eb6ce"></div>
<span class="t" style="left:6.2px;top:162.5px;font-size:12.5px;line-height:16px;color:#27313f;letter-spacing:0.26px;">11</span>
<div style="left:0;top:199px;width:25px;height:1px;background:#9eb6ce"></div>
<span class="t" style="left:6.2px;top:182.5px;font-size:12.5px;line-height:16px;color:#27313f;letter-spacing:-0.20px;">12</span>
<div style="left:0;top:219px;width:25px;height:1px;background:#9eb6ce"></div>
<span class="t" style="left:6.2px;top:202.5px;font-size:12.5px;line-height:16px;color:#27313f;letter-spacing:-0.20px;">13</span>
<div style="left:0;top:239px;width:25px;height:1px;background:#9eb6ce"></div>
<span class="t" style="left:6.2px;top:222.5px;font-size:12.5px;line-height:16px;color:#27313f;letter-spacing:-0.20px;">14</span>
<div style="left:0;top:259px;width:25px;height:1px;background:#9eb6ce"></div>
<span class="t" style="left:6.2px;top:242.5px;font-size:12.5px;line-height:16px;color:#27313f;letter-spacing:-0.20px;">15</span>
<div style="left:0;top:279px;width:25px;height:1px;background:#9eb6ce"></div>
<span class="t" style="left:6.2px;top:262.5px;font-size:12.5px;line-height:16px;color:#27313f;letter-spacing:-0.20px;">16</span>
<div style="left:0;top:299px;width:25px;height:1px;background:#9eb6ce"></div>
<span class="t" style="left:6.2px;top:282.5px;font-size:12.5px;line-height:16px;color:#27313f;letter-spacing:-0.20px;">17</span>
<div style="left:0;top:319px;width:25px;height:1px;background:#9eb6ce"></div>
<span class="t" style="left:6.2px;top:302.5px;font-size:12.5px;line-height:16px;color:#27313f;letter-spacing:-0.20px;">18</span>
<div style="left:0;top:339px;width:25px;height:1px;background:#9eb6ce"></div>
<span class="t" style="left:6.2px;top:322.5px;font-size:12.5px;line-height:16px;color:#27313f;letter-spacing:-0.20px;">19</span>
<div style="left:0;top:359px;width:25px;height:1px;background:#9eb6ce"></div>
<span class="t" style="left:6.2px;top:342.5px;font-size:12.5px;line-height:16px;color:#27313f;letter-spacing:-0.20px;">20</span>
<div style="left:0;top:379px;width:25px;height:1px;background:#9eb6ce"></div>
<span class="t" style="left:6.2px;top:362.5px;font-size:12.5px;line-height:16px;color:#27313f;letter-spacing:-0.20px;">21</span>
<div style="left:0;top:399px;width:25px;height:1px;background:#9eb6ce"></div>
<span class="t" style="left:6.2px;top:382.5px;font-size:12.5px;line-height:16px;color:#27313f;letter-spacing:-0.20px;">22</span>
<div style="left:0;top:419px;width:25px;height:1px;background:#9eb6ce"></div>
<span class="t" style="left:6.2px;top:402.5px;font-size:12.5px;line-height:16px;color:#27313f;letter-spacing:-0.20px;">23</span>
<div style="left:0;top:439px;width:25px;height:1px;background:#9eb6ce"></div>
<span class="t" style="left:6.2px;top:422.5px;font-size:12.5px;line-height:16px;color:#27313f;letter-spacing:-0.20px;">24</span>
<div style="left:0;top:459px;width:25px;height:1px;background:#9eb6ce"></div>
<span class="t" style="left:6.2px;top:442.5px;font-size:12.5px;line-height:16px;color:#27313f;letter-spacing:-0.20px;">25</span>
<div style="left:0;top:479px;width:25px;height:1px;background:#9eb6ce"></div>
<span class="t" style="left:6.2px;top:462.5px;font-size:12.5px;line-height:16px;color:#27313f;letter-spacing:-0.20px;">26</span>
<div style="left:0;top:499px;width:25px;height:1px;background:#9eb6ce"></div>
<span class="t" style="left:6.2px;top:482.5px;font-size:12.5px;line-height:16px;color:#27313f;letter-spacing:-0.20px;">27</span>
<div style="left:0;top:519px;width:25px;height:1px;background:#9eb6ce"></div>
<span class="t" style="left:6.2px;top:502.5px;font-size:12.5px;line-height:16px;color:#27313f;letter-spacing:-0.20px;">28</span>
<div style="left:0;top:300px;width:25px;height:19px;background:linear-gradient(90deg,#f9dba4,#f4c466);border-bottom:1px solid #f29536"></div>
<span class="t" style="left:6.2px;top:302.5px;font-size:12.5px;line-height:16px;color:#27313f;letter-spacing:-0.20px;">18</span>
<span class="t" style="left:200.5px;top:102.5px;font-size:12.5px;line-height:16px;color:#000;letter-spacing:0.05px;">25</span>
<span class="t" style="left:200.5px;top:122.5px;font-size:12.5px;line-height:16px;color:#000;letter-spacing:0.05px;">12</span>
<span class="t" style="left:200.5px;top:142.5px;font-size:12.5px;line-height:16px;color:#000;letter-spacing:0.05px;">34</span>
<span class="t" style="left:200.5px;top:162.5px;font-size:12.5px;line-height:16px;color:#000;letter-spacing:0.05px;">23</span>
<span class="t" style="left:200.5px;top:182.5px;font-size:12.5px;line-height:16px;color:#000;letter-spacing:0.05px;">56</span>
<span class="t" style="left:200.5px;top:202.5px;font-size:12.5px;line-height:16px;color:#000;letter-spacing:0.05px;">47</span>
<span class="t" style="left:200.5px;top:222.5px;font-size:12.5px;line-height:16px;color:#000;letter-spacing:0.05px;">12</span>
<span class="t" style="left:200.5px;top:242.5px;font-size:12.5px;line-height:16px;color:#000;letter-spacing:0.05px;">38</span>
<div style="left:1176px;top:298px;width:67px;height:23px;border:3px solid #000"></div>
<div style="left:1238px;top:316px;width:7px;height:7px;background:#000;border:1px solid #fff"></div>
</div>
<div style="left:1347px;top:168px;width:15px;height:522px;background:linear-gradient(90deg,#7c99c8,#9ab5de 35%,#91add8 70%,#86a3d0)"></div>
<div style="left:1362px;top:164px;width:4px;height:543px;background:linear-gradient(90deg,#aac4ea,#bdd4f4)"></div>
<div style="left:1348px;top:169px;width:13px;height:6px;background:#f2f6fb;border:1px solid #6d84a8;border-radius:1px"></div>
<div style="left:1351px;top:171px;width:7px;height:1px;background:#6d84a8"></div>
<svg style="left:1349px;top:182px" width="11" height="6"><path d="M0 6L5.500 0l5.500 6z" fill="#4d6185"/></svg>
<div style="left:1348px;top:245px;width:14px;height:428px;border:1px solid #6d84a8;border-radius:2px;background:linear-gradient(90deg,#f4f7fb,#e6ebf3 40%,#c5d0e0 85%,#b4c1d6)"></div>
<div style="left:1351px;top:455px;width:8px;height:7px;background:repeating-linear-gradient(#5f7191 0,#5f7191 1px,transparent 1px,transparent 2px)"></div>
<svg style="left:1349px;top:678px" width="11" height="6"><path d="M0 0h11L5.500 6z" fill="#4d6185"/></svg>
<div style="left:310px;top:226px;width:659px;height:403px;background:#fff;border:1px solid #868686"></div>
<div style="left:356px;top:512px;width:486px;height:1px;background:#868686"></div>
<div style="left:356px;top:466px;width:486px;height:1px;background:#868686"></div>
<div style="left:356px;top:420px;width:486px;height:1px;background:#868686"></div>
<div style="left:356px;top:375px;width:486px;height:1px;background:#868686"></div>
<div style="left:356px;top:329px;width:486px;height:1px;background:#868686"></div>
<div style="left:356px;top:283px;width:486px;height:1px;background:#868686"></div>
<div style="left:356px;top:237px;width:486px;height:1px;background:#868686"></div>
<div style="left:356px;top:558px;width:486px;height:1px;background:#868686"></div>
<div style="left:437px;top:237px;width:1px;height:326px;background:#868686"></div>
<div style="left:356px;top:558px;width:1px;height:5px;background:#868686"></div>
<span class="t" style="left:349.8px;top:573.0px;font-size:11.5px;line-height:15px;color:#000;">-2</span>
<div style="left:437px;top:558px;width:1px;height:5px;background:#868686"></div>
<span class="t" style="left:434.1px;top:573.0px;font-size:11.5px;line-height:15px;color:#000;">0</span>
<div style="left:518px;top:558px;width:1px;height:5px;background:#868686"></div>
<span class="t" style="left:515.0px;top:573.0px;font-size:11.5px;line-height:15px;color:#000;">2</span>
<div style="left:599px;top:558px;width:1px;height:5px;background:#868686"></div>
<span class="t" style="left:595.8px;top:573.0px;font-size:11.5px;line-height:15px;color:#000;">4</span>
<div style="left:679px;top:558px;width:1px;height:5px;background:#868686"></div>
<span class="t" style="left:676.7px;top:573.0px;font-size:11.5px;line-height:15px;color:#000;">6</span>
<div style="left:760px;top:558px;width:1px;height:5px;background:#868686"></div>
<span class="t" style="left:757.5px;top:573.0px;font-size:11.5px;line-height:15px;color:#000;">8</span>
<div style="left:841px;top:558px;width:1px;height:5px;background:#868686"></div>
<span class="t" style="left:835.2px;top:573.0px;font-size:11.5px;line-height:15px;color:#000;">10</span>
<span class="t" style="left:418.6px;top:551.0px;font-size:11.5px;line-height:15px;color:#000;">0</span>
<span class="t" style="left:413.0px;top:505.0px;font-size:11.5px;line-height:15px;color:#000;letter-spacing:-0.40px;">10</span>
<span class="t" style="left:413.0px;top:459.0px;font-size:11.5px;line-height:15px;color:#000;letter-spacing:-0.40px;">20</span>
<span class="t" style="left:413.0px;top:413.0px;font-size:11.5px;line-height:15px;color:#000;letter-spacing:-0.40px;">30</span>
<span class="t" style="left:413.0px;top:368.0px;font-size:11.5px;line-height:15px;color:#000;letter-spacing:-0.40px;">40</span>
<span class="t" style="left:413.0px;top:322.0px;font-size:11.5px;line-height:15px;color:#000;letter-spacing:-0.40px;">50</span>
<span class="t" style="left:413.0px;top:276.0px;font-size:11.5px;line-height:15px;color:#000;letter-spacing:-0.40px;">60</span>
<span class="t" style="left:413.0px;top:230.0px;font-size:11.5px;line-height:15px;color:#000;letter-spacing:-0.40px;">70</span>
<div style="left:431.4px;top:397.8px;width:90.8px;height:90.8px;border-radius:50%;background:radial-gradient(circle at 42.500% 31%, rgba(255,152,148,1) 0, rgba(253,136,132,.97) 5%, rgba(240,116,112,.78) 12%, rgba(220,98,95,.42) 22%, rgba(205,88,85,.15) 30%, rgba(200,85,82,0) 37%),radial-gradient(circle 57.2px at 50% 37%, rgba(80,20,20,0) 50%, rgba(80,20,20,.3) 70%, rgba(72,17,17,.62) 84%, rgba(95,28,28,.42) 91%, rgba(228,120,115,.5) 96.500%, rgba(246,142,137,.85) 100%),radial-gradient(circle 59.9px at 34% 47%, rgba(70,15,15,0) 50%, rgba(70,15,15,.28) 74%, rgba(60,12,12,.58) 90%, rgba(45,8,8,.85) 100%),radial-gradient(circle at 60% 72%, rgba(215,110,105,.38) 0, rgba(215,110,105,0) 20%),radial-gradient(circle at 42% 33%, #c95855 0, #bf514e 32%, #b24947 58%, #a03f3c 82%, #94383600 100%), #943836;box-shadow:inset 1px 1px 2px rgba(110,35,35,.45)"></div>
<div style="left:471.9px;top:457.0px;width:90.8px;height:90.8px;border-radius:50%;background:radial-gradient(circle at 42.500% 31%, rgba(255,152,148,1) 0, rgba(253,136,132,.97) 5%, rgba(240,116,112,.78) 12%, rgba(220,98,95,.42) 22%, rgba(205,88,85,.15) 30%, rgba(200,85,82,0) 37%),radial-gradient(circle 57.2px at 50% 37%, rgba(80,20,20,0) 50%, rgba(80,20,20,.3) 70%, rgba(72,17,17,.62) 84%, rgba(95,28,28,.42) 91%, rgba(228,120,115,.5) 96.500%, rgba(246,142,137,.85) 100%),radial-gradient(circle 59.9px at 34% 47%, rgba(70,15,15,0) 50%, rgba(70,15,15,.28) 74%, rgba(60,12,12,.58) 90%, rgba(45,8,8,.85) 100%),radial-gradient(circle at 60% 72%, rgba(215,110,105,.38) 0, rgba(215,110,105,0) 20%),radial-gradient(circle at 42% 33%, #c95855 0, #bf514e 32%, #b24947 58%, #a03f3c 82%, #94383600 100%), #943836;box-shadow:inset 1px 1px 2px rgba(110,35,35,.45)"></div>
<div style="left:512.3px;top:356.8px;width:90.8px;height:90.8px;border-radius:50%;background:radial-gradient(circle at 42.500% 31%, rgba(255,152,148,1) 0, rgba(253,136,132,.97) 5%, rgba(240,116,112,.78) 12%, rgba(220,98,95,.42) 22%, rgba(205,88,85,.15) 30%, rgba(200,85,82,0) 37%),radial-gradient(circle 57.2px at 50% 37%, rgba(80,20,20,0) 50%, rgba(80,20,20,.3) 70%, rgba(72,17,17,.62) 84%, rgba(95,28,28,.42) 91%, rgba(228,120,115,.5) 96.500%, rgba(246,142,137,.85) 100%),radial-gradient(circle 59.9px at 34% 47%, rgba(70,15,15,0) 50%, rgba(70,15,15,.28) 74%, rgba(60,12,12,.58) 90%, rgba(45,8,8,.85) 100%),radial-gradient(circle at 60% 72%, rgba(215,110,105,.38) 0, rgba(215,110,105,0) 20%),radial-gradient(circle at 42% 33%, #c95855 0, #bf514e 32%, #b24947 58%, #a03f3c 82%, #94383600 100%), #943836;box-shadow:inset 1px 1px 2px rgba(110,35,35,.45)"></div>
<div style="left:552.7px;top:406.9px;width:90.8px;height:90.8px;border-radius:50%;background:radial-gradient(circle at 42.500% 31%, rgba(255,152,148,1) 0, rgba(253,136,132,.97) 5%, rgba(240,116,112,.78) 12%, rgba(220,98,95,.42) 22%, rgba(205,88,85,.15) 30%, rgba(200,85,82,0) 37%),radial-gradient(circle 57.2px at 50% 37%, rgba(80,20,20,0) 50%, rgba(80,20,20,.3) 70%, rgba(72,17,17,.62) 84%, rgba(95,28,28,.42) 91%, rgba(228,120,115,.5) 96.500%, rgba(246,142,137,.85) 100%),radial-gradient(circle 59.9px at 34% 47%, rgba(70,15,15,0) 50%, rgba(70,15,15,.28) 74%, rgba(60,12,12,.58) 90%, rgba(45,8,8,.85) 100%),radial-gradient(circle at 60% 72%, rgba(215,110,105,.38) 0, rgba(215,110,105,0) 20%),radial-gradient(circle at 42% 33%, #c95855 0, #bf514e 32%, #b24947 58%, #a03f3c 82%, #94383600 100%), #943836;box-shadow:inset 1px 1px 2px rgba(110,35,35,.45)"></div>
<div style="left:593.2px;top:256.5px;width:90.8px;height:90.8px;border-radius:50%;background:radial-gradient(circle at 42.500% 31%, rgba(255,152,148,1) 0, rgba(253,136,132,.97) 5%, rgba(240,116,112,.78) 12%, rgba(220,98,95,.42) 22%, rgba(205,88,85,.15) 30%, rgba(200,85,82,0) 37%),radial-gradient(circle 57.2px at 50% 37%, rgba(80,20,20,0) 50%, rgba(80,20,20,.3) 70%, rgba(72,17,17,.62) 84%, rgba(95,28,28,.42) 91%, rgba(228,120,115,.5) 96.500%, rgba(246,142,137,.85) 100%),radial-gradient(circle 59.9px at 34% 47%, rgba(70,15,15,0) 50%, rgba(70,15,15,.28) 74%, rgba(60,12,12,.58) 90%, rgba(45,8,8,.85) 100%),radial-gradient(circle at 60% 72%, rgba(215,110,105,.38) 0, rgba(215,110,105,0) 20%),radial-gradient(circle at 42% 33%, #c95855 0, #bf514e 32%, #b24947 58%, #a03f3c 82%, #94383600 100%), #943836;box-shadow:inset 1px 1px 2px rgba(110,35,35,.45)"></div>
<div style="left:633.6px;top:297.5px;width:90.8px;height:90.8px;border-radius:50%;background:radial-gradient(circle at 42.500% 31%, rgba(255,152,148,1) 0, rgba(253,136,132,.97) 5%, rgba(240,116,112,.78) 12%, rgba(220,98,95,.42) 22%, rgba(205,88,85,.15) 30%, rgba(200,85,82,0) 37%),radial-gradient(circle 57.2px at 50% 37%, rgba(80,20,20,0) 50%, rgba(80,20,20,.3) 70%, rgba(72,17,17,.62) 84%, rgba(95,28,28,.42) 91%, rgba(228,120,115,.5) 96.500%, rgba(246,142,137,.85) 100%),radial-gradient(circle 59.9px at 34% 47%, rgba(70,15,15,0) 50%, rgba(70,15,15,.28) 74%, rgba(60,12,12,.58) 90%, rgba(45,8,8,.85) 100%),radial-gradient(circle at 60% 72%, rgba(215,110,105,.38) 0, rgba(215,110,105,0) 20%),radial-gradient(circle at 42% 33%, #c95855 0, #bf514e 32%, #b24947 58%, #a03f3c 82%, #94383600 100%), #943836;box-shadow:inset 1px 1px 2px rgba(110,35,35,.45)"></div>
<div style="left:674.0px;top:457.0px;width:90.8px;height:90.8px;border-radius:50%;background:radial-gradient(circle at 42.500% 31%, rgba(255,152,148,1) 0, rgba(253,136,132,.97) 5%, rgba(240,116,112,.78) 12%, rgba(220,98,95,.42) 22%, rgba(205,88,85,.15) 30%, rgba(200,85,82,0) 37%),radial-gradient(circle 57.2px at 50% 37%, rgba(80,20,20,0) 50%, rgba(80,20,20,.3) 70%, rgba(72,17,17,.62) 84%, rgba(95,28,28,.42) 91%, rgba(228,120,115,.5) 96.500%, rgba(246,142,137,.85) 100%),radial-gradient(circle 59.9px at 34% 47%, rgba(70,15,15,0) 50%, rgba(70,15,15,.28) 74%, rgba(60,12,12,.58) 90%, rgba(45,8,8,.85) 100%),radial-gradient(circle at 60% 72%, rgba(215,110,105,.38) 0, rgba(215,110,105,0) 20%),radial-gradient(circle at 42% 33%, #c95855 0, #bf514e 32%, #b24947 58%, #a03f3c 82%, #94383600 100%), #943836;box-shadow:inset 1px 1px 2px rgba(110,35,35,.45)"></div>
<div style="left:714.4px;top:338.5px;width:90.8px;height:90.8px;border-radius:50%;background:radial-gradient(circle at 42.500% 31%, rgba(255,152,148,1) 0, rgba(253,136,132,.97) 5%, rgba(240,116,112,.78) 12%, rgba(220,98,95,.42) 22%, rgba(205,88,85,.15) 30%, rgba(200,85,82,0) 37%),radial-gradient(circle 57.2px at 50% 37%, rgba(80,20,20,0) 50%, rgba(80,20,20,.3) 70%, rgba(72,17,17,.62) 84%, rgba(95,28,28,.42) 91%, rgba(228,120,115,.5) 96.500%, rgba(246,142,137,.85) 100%),radial-gradient(circle 59.9px at 34% 47%, rgba(70,15,15,0) 50%, rgba(70,15,15,.28) 74%, rgba(60,12,12,.58) 90%, rgba(45,8,8,.85) 100%),radial-gradient(circle at 60% 72%, rgba(215,110,105,.38) 0, rgba(215,110,105,0) 20%),radial-gradient(circle at 42% 33%, #c95855 0, #bf514e 32%, #b24947 58%, #a03f3c 82%, #94383600 100%), #943836;box-shadow:inset 1px 1px 2px rgba(110,35,35,.45)"></div>
<div style="left:908.500px;top:422px;width:9px;height:9px;border-radius:50%;background:radial-gradient(circle at 40% 35%,#f08a86 0,#c45350 45%,#8e3532 100%)"></div>
<span class="t" style="left:921.0px;top:419.5px;font-size:11.5px;line-height:15px;color:#000;letter-spacing:0.13px;">Série1</span>
<div style="left:0;top:688px;width:1362px;height:2px;background:#fff"></div>
<div style="left:0;top:688px;width:25px;height:2px;background:#e4ecf7"></div>
<div style="left:0;top:690px;width:1366px;height:17px;background:linear-gradient(#9ebae3,#8eabdb 50%,#86a4d5)"></div>
<div style="left:0;top:690px;width:1366px;height:1px;background:#a9c2e8"></div>
<div style="left:0;top:706px;width:1366px;height:1px;background:#6f8bbb"></div>
<div style="left:0;top:691px;width:63px;height:15px;background:linear-gradient(#d8e5f6,#bcd1ee 55%,#cbdcf3);border-right:1px solid #8ba3c5;border-top:1px solid #8ba3c5"></div>
<svg style="left:4px;top:694px" width="54" height="10" viewBox="0 0 54 10"><g fill="#1f3f80"><rect x="2" y="0.500" width="1.500" height="9"/><path d="M9 0.500v9L4 5z"/><path d="M22.500 0.500v9L17.500 5z"/><path d="M31.500 0.500v9L36.500 5z"/><path d="M45 0.500v9L50 5z"/><rect x="50.500" y="0.500" width="1.500" height="9"/></g></svg>
<svg style="left:63px;top:690px" width="215" height="17" viewBox="0 0 215 17">
<defs><linearGradient id="tg" x1="0" y1="0" x2="0" y2="1"><stop offset="0" stop-color="#dbe7f7"/><stop offset=".6" stop-color="#bfd3ef"/><stop offset="1" stop-color="#b3caea"/></linearGradient></defs>
<path d="M53 16.500L65 0.500H210L198 16.500z" fill="url(#tg)" stroke="#7f98c0"/>
<path d="M108 16.500L121 0.500M164 16.500L177 0.500" stroke="#7f98c0" fill="none"/>
<path d="M110 16.500L122 1.500M166 16.500L178 1.500M55 16.500L66 1.500" stroke="#fff" fill="none" opacity=".7"/>
<path d="M0 0.500H65L53 16.500H0z" fill="#fff"/><path d="M65 0.500L53 16.500" stroke="#7f98c0" fill="none"/><path d="M0 17V0.500" stroke="#8ba3c5"/>
<path d="M53 16.500h7l-3.500-3z" fill="#8fa5c8" opacity=".7"/><path d="M108 16.500h7l-3.500-3z" fill="#8fa5c8" opacity=".7"/><path d="M164 16.500h7l-3.500-3z" fill="#8fa5c8" opacity=".7"/>
</svg>
<span class="t" style="left:72.5px;top:691.0px;font-size:12.5px;line-height:16px;color:#15326f;letter-spacing:-0.30px;font-weight:bold;">Folha1</span>
<span class="t" style="left:130.3px;top:691.0px;font-size:12px;line-height:16px;color:#1c3f86;letter-spacing:-0.37px;">Folha2</span>
<span class="t" style="left:186.3px;top:691.0px;font-size:12px;line-height:16px;color:#1c3f86;letter-spacing:-0.37px;">Folha3</span>
<svg style="left:241px;top:692px" width="17" height="14" viewBox="0 0 17 14"><path d="M4.500 3.500h11v7c-2 1-4 2-6 2h-5z" fill="#fff" stroke="#5a6f96"/><path d="M3.500 0l1 2.500 2.500.5-2 1.500.5 2.500-2-1.500-2 1.500.5-2.500-2-1.500 2.500-.5z" fill="#f9c43a" stroke="#d79a12" stroke-width=".5"/></svg>
<div style="left:808px;top:692px;width:7px;height:14px;background:#eef3fa;border:1px solid #6d84a8;border-radius:1px"></div>
<div style="left:811px;top:695px;width:1px;height:8px;background:#5a6f96"></div>
<div style="left:816px;top:691px;width:17px;height:15px;background:rgba(70,100,155,.28)"></div>
<svg style="left:820px;top:694px" width="6" height="10"><path d="M5.500 0v10L0 5z" fill="#4d6185"/></svg>
<div style="left:833px;top:691px;width:438px;height:15px;border:1px solid #4f6590;border-radius:2px;background:linear-gradient(#f4f7fb,#e3e9f2 40%,#c5d0e0 90%,#b4c1d6)"></div>
<div style="left:1048px;top:695px;width:8px;height:8px;background:repeating-linear-gradient(90deg,#5f7191 0,#5f7191 1px,transparent 1px,transparent 2px)"></div>
<svg style="left:1326px;top:694px" width="6" height="10"><path d="M0 0v10L5.500 5z" fill="#4d6185"/></svg>
<div style="left:1339px;top:692px;width:7px;height:14px;background:#eef3fa;border:1px solid #6d84a8;border-radius:1px"></div>
<div style="left:1342px;top:695px;width:1px;height:8px;background:#5a6f96"></div>
<div style="left:0;top:707px;width:1366px;height:21px;background:linear-gradient(#eaf2fc 0,#dce8f9 24%,#bed3f2 30%,#c3d7f3 55%,#d3e2f7 88%,#cfdff5 100%)"></div>
<div style="left:1120px;top:707px;width:246px;height:21px;border-radius:0;background:linear-gradient(#d2e1f7 0,#c3d7f3 24%,#a3c0eb 31%,#a6c2ec 58%,#bad1f1 100%);border-left:1px solid #8faad4"></div>
<div style="left:67px;top:708px;width:1px;height:19px;background:#9fb6d8"></div><div style="left:68px;top:708px;width:1px;height:19px;background:#eef4fc"></div>
<span class="t" style="left:7.5px;top:710.0px;font-size:11px;line-height:14px;color:#15326f;letter-spacing:0.27px;">Pronto</span>
<div style="left:1126px;top:708px;width:56px;height:19px;border:1px solid #8ea6c9;border-radius:2px;background:linear-gradient(#e6eefa,#c9d9ef)"></div>
<div style="left:1126px;top:708px;width:19px;height:19px;border:1px solid #d9a850;border-radius:2px 0 0 2px;background:linear-gradient(#fde1a4,#fbc75f 50%,#fdd98a)"></div>
<svg style="left:1130px;top:712px" width="13" height="11" viewBox="0 0 13 11"><path d="M0.500 0.500h12v10h-12zM0.500 3.500h12M0.500 7h12M4.500 0.500v10M8.500 0.500v10" fill="#fff" stroke="#5c5c5c"/></svg>
<svg style="left:1148px;top:712px" width="13" height="11" viewBox="0 0 13 11"><rect x="0.500" y="0.500" width="12" height="10" fill="#c3c5c9" stroke="#6a6a6a"/><rect x="3.500" y="2.500" width="6" height="6" fill="#fff" stroke="#777"/><path d="M5 4.500h3M5 6.500h3" stroke="#aaa"/></svg>
<svg style="left:1166px;top:712px" width="13" height="11" viewBox="0 0 13 11"><rect x="0.500" y="0.500" width="12" height="10" fill="#c3c5c9" stroke="#6a6a6a"/><path d="M2.500 1.500h3v5h-3zM7.500 1.500h3.500v5h-3.500z" fill="#fff" stroke="#777"/></svg>
<span class="t" style="left:1190.5px;top:710.3px;font-size:11px;line-height:14px;color:#15326f;letter-spacing:-0.28px;">100%</span>
<svg style="left:1226.0px;top:708.500px" width="17" height="17" viewBox="0 0 17 17"><circle cx="8.500" cy="8.500" r="7.500" fill="#e5edf9" stroke="#5f7396" stroke-width="1.200"/><circle cx="8.500" cy="8.500" r="6" fill="none" stroke="#fff"/><path d="M4.500 8.500h8" stroke="#3b4a66" stroke-width="2"/></svg>
<svg style="left:1344.0px;top:708.500px" width="17" height="17" viewBox="0 0 17 17"><circle cx="8.500" cy="8.500" r="7.500" fill="#e5edf9" stroke="#5f7396" stroke-width="1.200"/><circle cx="8.500" cy="8.500" r="6" fill="none" stroke="#fff"/><path d="M4.500 8.500h8M8.500 4.500v8" stroke="#3b4a66" stroke-width="2"/></svg>
<div style="left:1244px;top:717px;width:99px;height:1px;background:#6e86ad"></div><div style="left:1244px;top:718px;width:99px;height:1px;background:#e8f0fb"></div>
<svg style="left:1288px;top:709px" width="11" height="15" viewBox="0 0 11 15"><path d="M1 1h9v8l-4.500 5L1 9z" fill="#e9eff9" stroke="#5f7396"/><path d="M2.500 2.500h6v6" fill="none" stroke="#fff"/></svg>
<div style="left:0;top:728px;width:1366px;height:40px;background:linear-gradient(100deg,#0c1117 0,#0e141b 380px,#1a222c 430px,#171f28 500px,#10161d 560px,#1a222c 620px,#1b232d 700px,#0b1015 750px,#0b1015 850px,#18202a 890px,#161d26 940px,#0d1319 1000px,#0c1117 1366px)"></div>
<div style="left:0;top:728px;width:1366px;height:1px;background:#46505c"></div>
<svg style="left:7px;top:729px" width="40" height="40" viewBox="0 0 40 40"><defs>
<radialGradient id="og" cx=".5" cy=".85" r=".9"><stop offset="0" stop-color="#5fd0ff"/><stop offset=".35" stop-color="#1f7fc8"/><stop offset=".7" stop-color="#174f90"/><stop offset="1" stop-color="#2b5f9a"/></radialGradient>
<linearGradient id="oh" x1="0" y1="0" x2="0" y2="1"><stop offset="0" stop-color="#fff" stop-opacity=".75"/><stop offset="1" stop-color="#fff" stop-opacity=".08"/></linearGradient></defs>
<circle cx="20" cy="20" r="18" fill="url(#og)" stroke="#8fb6dc" stroke-opacity=".7" stroke-width="1"/>
<path d="M3 15a17.500 17.500 0 0 1 34 0c-8 4.500-24 4.500-34 0z" fill="url(#oh)"/>
<path d="M12.500 10.500c2.500-1.300 4.500-1.300 6.500 0l-1.600 7.500c-2-1.200-4.200-1.200-6.600 0z" fill="#f0642a"/>
<path d="M20.500 11c2.200 1.200 4.300 1.200 6.700 0l-1.700 7.500c-2.300 1.200-4.500 1.200-6.600 0z" fill="#8dc63f"/>
<path d="M10.400 19.500c2.300-1.200 4.500-1.200 6.600 0l-1.700 7.500c-2-1.200-4.300-1.200-6.600 0z" fill="#3aa0e6"/>
<path d="M18.500 20c2.200 1.200 4.300 1.200 6.600 0l-1.700 7.500c-2.300 1.200-4.500 1.200-6.600 0z" fill="#fcc21b"/></svg>
<div style="left:60px;top:729px;width:58px;height:38px;border:1px solid #9a9ea3;border-radius:3px;background:linear-gradient(135deg,#666a70 0,#3a3d43 40%,#24272b 60%,#45494f 100%);box-shadow:inset 0 0 0 1px rgba(255,255,255,.12)"></div>
<svg style="left:72px;top:734px" width="34" height="30" viewBox="0 0 34 30"><path d="M2 4h10l2 2h17v20H2z" fill="#f3d27a" stroke="#c9a348" stroke-width=".8"/><rect x="5" y="1.500" width="4" height="3" fill="#2eaa3c"/><rect x="13" y="3.500" width="4" height="3" fill="#d0342c"/><rect x="21" y="5.500" width="4" height="3" fill="#2c8fd8"/><path d="M4 6h9l2 2h15v3H4z" fill="#fdf6d8"/><path d="M1.500 10h31l-1 17h-29z" fill="#f8e08e" stroke="#c9a348" stroke-width=".8"/><path d="M6 18h22v10h-5v-5h-12v5H6z" fill="#8ec4ee" stroke="#5d9bd0" stroke-width=".8"/><path d="M6 18h22v2.500H6z" fill="#c9e5f9"/></svg>
<svg style="left:136px;top:736px" width="28" height="26" viewBox="0 0 28 26"><path d="M6 1h20v22H6z" fill="#7db4e4" stroke="#5a93c8" stroke-width=".8"/><path d="M3.500 2h20v22h-20z" fill="#95c4ec" stroke="#5a93c8" stroke-width=".8"/><path d="M1 3h20v22H1z" fill="#a8d0f0" stroke="#5a93c8" stroke-width=".8"/><circle cx="11" cy="13.500" r="8" fill="#f07a1c" stroke="#f8b57a" stroke-width="1"/><path d="M8.500 8.500v10l8-5z" fill="#fff"/></svg>
<svg style="left:196px;top:734px" width="33" height="29" viewBox="0 0 33 29"><path d="M14 3l18-2-1 19-17-1z" fill="#2c55a8" stroke="#9fb4d8" stroke-width="1"/><path d="M16 5l14-1.500-.8 14L16 16z" fill="#3b6ed0"/><path d="M25 3l6-1-1 10z" fill="#8fb2ea" opacity=".7"/><circle cx="12" cy="8" r="4.500" fill="#e9b98a"/><path d="M7.500 7c0-3.500 3-5 6-4 2 .6 3 2 3 3.500-2-.5-4-1.500-5-2.500-1 1.500-2.500 2.500-4 3z" fill="#5a3a1c"/><path d="M4 27c-1-6 2-11 8-12 4 0 6 1 8 3l-3 3 3 6z" fill="#4fa8e0"/><path d="M14 18l10-9 2 1.500-9 10z" fill="#4fa8e0" stroke="#2d7fc0" stroke-width=".5"/><path d="M1 22c5 4 14 4 21-3" fill="none" stroke="#f2c21a" stroke-width="2.200"/><path d="M20 22h7v3h-7z" fill="#b9bec6"/></svg>
<div style="left:300px;top:729px;width:5px;height:38px;border:1px solid #8f9398;border-left:none;border-radius:0 3px 3px 0;background:#2a2d32"></div>
<div style="left:246px;top:729px;width:54px;height:38px;border:1px solid #9a9ea3;border-radius:3px;background:linear-gradient(135deg,#666a70 0,#3a3d43 40%,#24272b 60%,#45494f 100%);box-shadow:inset 0 0 0 1px rgba(255,255,255,.12)"></div>
<svg style="left:255px;top:732px" width="34" height="31" viewBox="0 0 34 31"><path d="M4 4c6-3 14-3 20-2l-2 22c-6-1-14 0-20 3z" fill="#2f5fb8" stroke="#8fb0e8" stroke-width=".8"/><path d="M4 4c3-1.500 6-2 9-2.500L9 25c-2 .5-5 1.500-7 2.500z" fill="#5f8ee0" opacity=".8"/><path d="M12 6l20 3-4 21-20-4z" fill="#f7f9fd" stroke="#c5cfe0" stroke-width=".7"/><text x="14" y="17" font-family="Liberation Sans,sans-serif" font-size="11" font-weight="bold" font-style="italic" fill="#2a4fa8" transform="rotate(9 14 17)">W</text><path d="M24 12.500l6 1M23.500 15.500l6 1M12 18.500l16.500 2.800M11.500 21.500l16.500 2.800M11 24.200l10 1.700" stroke="#2a4fa8" stroke-width="1.500"/></svg>
<div style="left:308px;top:729px;width:58px;height:38px;border:1px solid #d2d5d8;border-radius:3px;background:linear-gradient(135deg,#bfc2c5 0,#96999d 35%,#686b70 58%,#9a9da1 100%);box-shadow:inset 0 0 0 1px rgba(255,255,255,.12)"></div>
<svg style="left:320px;top:731px" width="34" height="32" viewBox="0 0 34 32"><path d="M3 5c6-3 14-4 20-3l2 22c-7-1-14 0-21 3z" fill="#e9f2e4" stroke="#6aa84f" stroke-width="1.200"/><path d="M3 5c3-1.500 6-2.500 9-3" fill="none" stroke="#3f8a2c" stroke-width="1.500"/><path d="M6 9l26 3-3 19-25-3z" fill="#f4f8f1" stroke="#b9cdb0" stroke-width=".7"/><text x="9" y="21" font-family="Liberation Sans,sans-serif" font-size="14" font-weight="bold" fill="#2d7a22" transform="rotate(7 9 21)">X</text><g fill="#6ab04c"><path d="M22 12.500l7 .8-.6 4-7-.9zM21 18l7 .9-.5 4-7-.9zM20.500 23.500l7 .9-.5 4-7-.9zM12.500 22.500l6.500.8-.5 4-6.500-.8zM5.500 21.700l5.500.7-.5 4-5.500-.7z"/></g></svg>
<span class="t" style="left:1149.0px;top:738.0px;font-size:12px;line-height:16px;color:#fff;letter-spacing:-0.92px;">PT</span>
<svg style="left:1179px;top:746px" width="9" height="6"><path d="M0 5.500L4.500 0.500 9 5.500z" fill="#f2f4f7"/></svg>
<svg style="left:1199px;top:744px" width="17" height="12" viewBox="0 0 17 12"><rect x="0" y="0" width="17" height="12" fill="#1a2cc0"/><rect x="2" y="2" width="13" height="8" fill="#fff"/><path d="M2 2l6.500 5L15 2M2 10l5-4M15 10l-5-4" fill="none" stroke="#1a2cc0" stroke-width="1.300"/></svg>
<svg style="left:1224px;top:740px" width="16" height="18" viewBox="0 0 16 18"><rect x="1" y="3.500" width="8" height="12.500" rx="1" fill="none" stroke="#fff" stroke-width="1.500"/><rect x="3.200" y="1.500" width="3.600" height="2" fill="#fff"/><path d="M6.500 5.500h8v3.500c0 2-1.500 3.300-4 3.300s-4-1.300-4-3.300z" fill="#fff" stroke="#0c1117" stroke-width=".8"/><path d="M8.500 1.500v4M12.500 1.500v4" stroke="#fff" stroke-width="1.500"/><path d="M10.500 12v2.500c0 1.500-.5 2.500-2 3" stroke="#fff" stroke-width="1.300" fill="none"/></svg>
<svg style="left:1248px;top:743px" width="15" height="12" viewBox="0 0 15 12"><g fill="#fff"><rect x="0" y="9" width="2" height="2.500"/><rect x="3" y="7.500" width="2" height="4"/><rect x="6" y="5.500" width="2" height="6"/><rect x="9" y="3" width="2" height="8.500"/><rect x="12" y="0.500" width="2" height="11"/></g></svg>
<span class="t" style="left:1297.3px;top:732.7px;font-size:12px;line-height:16px;color:#fff;letter-spacing:-0.81px;">23:20</span>
<span class="t" style="left:1281.0px;top:749.7px;font-size:12px;line-height:16px;color:#fff;letter-spacing:-0.34px;">28-08-2010</span>
<div style="left:1351px;top:729px;width:16px;height:39px;border:1px solid #8a8f96;border-right:none;border-radius:2px 0 0 2px;background:linear-gradient(100deg,#474c54,#23272d 55%,#30353c)"></div>
</body></html>
